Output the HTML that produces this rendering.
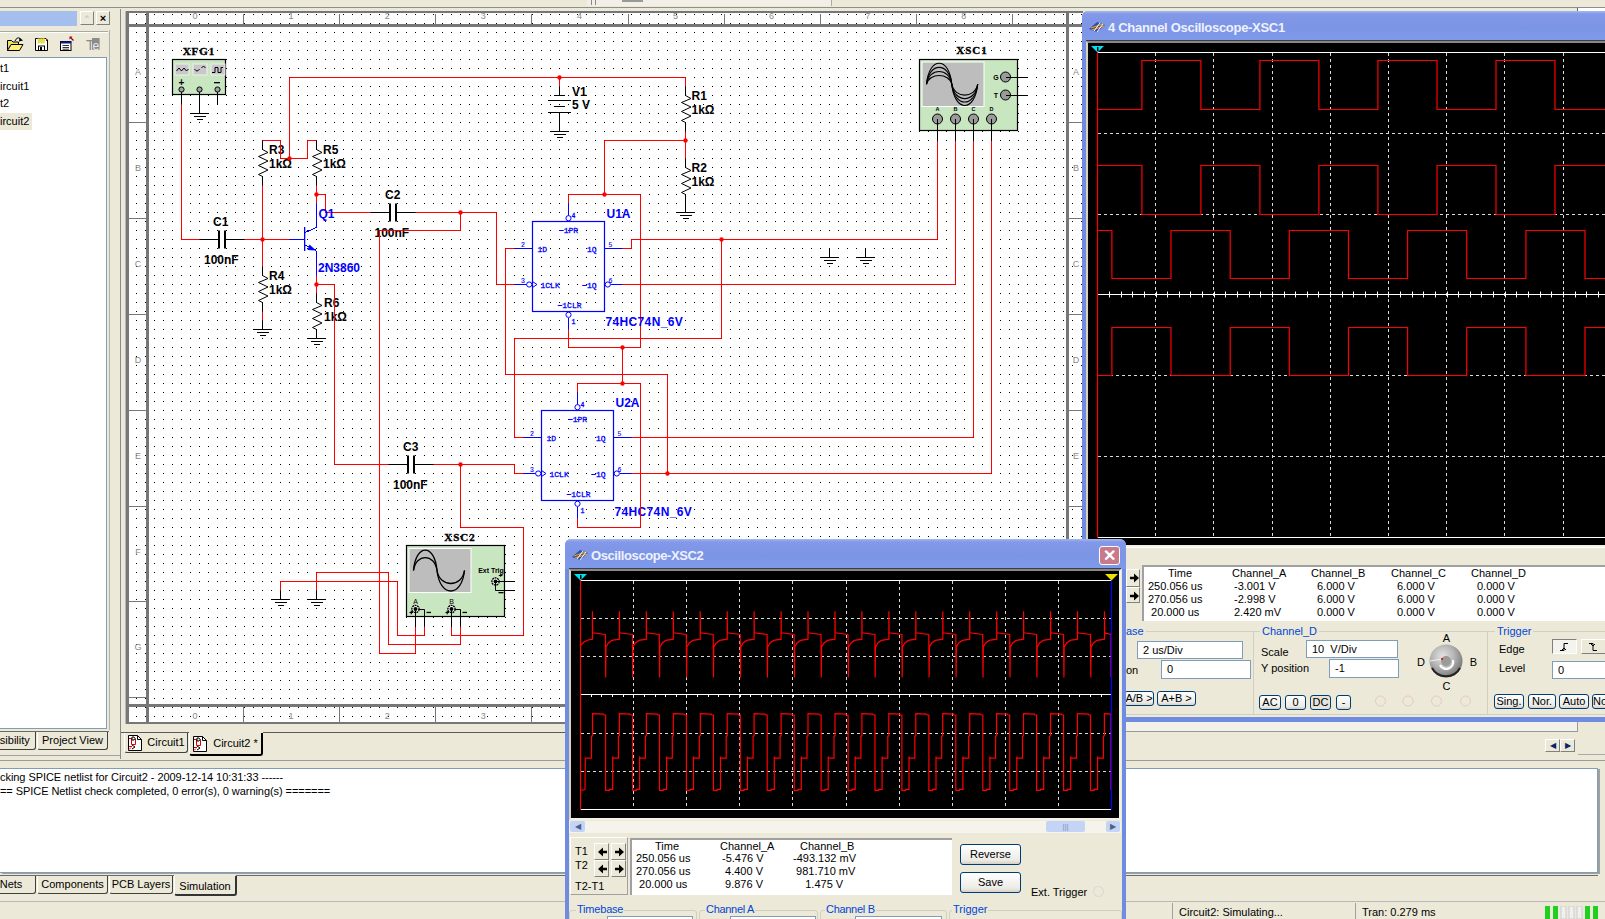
<!DOCTYPE html>
<html><head><meta charset="utf-8">
<style>
*{margin:0;padding:0;box-sizing:border-box}
html,body{width:1605px;height:919px;overflow:hidden;background:#ECE9D8;font-family:"Liberation Sans",sans-serif;font-size:11px;color:#000}
.a{position:absolute}
.btn3d{border:1px solid;border-color:#fff #808080 #808080 #fff;background:#ECE9D8}
.tab{position:absolute;height:18px;border:1px solid #404040;border-top:none;border-left-color:#FFFFFF;background:#ECE9D8;font-size:11px;line-height:16px;text-align:center;border-radius:0 0 3px 3px;white-space:pre}
.xpbtn{position:absolute;border:1px solid #003C74;border-radius:3px;background:linear-gradient(#FFFFFF,#ECEBE6 80%,#D6D0C5);font-size:11px;text-align:center}
.inp{position:absolute;background:#fff;border:1px solid #7F9DB9;font-size:11px;padding-left:5px}
.glab{position:absolute;color:#0046D5;font-size:11px}
.t{position:absolute;white-space:pre;font-size:11px;line-height:13px}
</style></head><body>
<div class="a" style="left:0;top:7px;width:1605px;height:1px;background:#8E8E8E"></div><div class="a" style="left:1577px;top:8px;width:28px;height:3px;background:#fff;border-left:1px solid #666"></div>
<div class="a" style="left:587px;top:0;width:245px;height:6px;border-right:1px solid #aaa;background:#F2F0E6"></div><div class="a" style="left:591px;top:0;width:1px;height:5px;background:#888"></div><div class="a" style="left:595px;top:0;width:1px;height:5px;background:#888"></div><div class="a" style="left:622px;top:0;width:21px;height:2px;background:#999"></div>

<!-- left panel -->
<div class="a" style="left:0;top:11px;width:77px;height:15px;background:#A4BEEE"></div>
<div class="a btn3d" style="left:80px;top:11px;width:14px;height:14px;color:#aaa;font-size:8px;text-align:center;line-height:12px">^</div>
<div class="a btn3d" style="left:96px;top:11px;width:14px;height:14px;font-weight:bold;font-size:11px;text-align:center;line-height:12px">×</div>

<svg class="a" style="left:0;top:0" width="112" height="58">
 <path d="M7.5 50.5 V40.5 H11.5 L13 42 H18.5 V50.5 Z" fill="#F0E060" stroke="#000"/>
 <path d="M7.5 50.5 L11 44.5 H23 L19.5 50.5 Z" fill="#FFF070" stroke="#000"/>
 <path d="M8 49.5 L11 44.8" stroke="#2020C0"/>
 <path d="M15 41 Q17 36.5 20 38.5" stroke="#000" fill="none"/><path d="M19.5 37.5 L23 40.5 L19 41.5 Z" fill="#000"/>
 <path d="M35.5 38.5 H46 L47.5 40 V50.5 H35.5 Z" fill="#fff" stroke="#000"/>
 <rect x="37.5" y="38.5" width="7.5" height="5" fill="#F0F040"/>
 <path d="M38 43 l6 -4.5 M38 41 l3.5 -2.5 M41 43.2 l4 -3" stroke="#C8C880"/>
 <rect x="38.5" y="46" width="6" height="4.5" fill="#fff" stroke="#000"/><rect x="40" y="47" width="2" height="3" fill="#000"/>
 <rect x="46" y="39" width="1" height="2" fill="#E00000"/>
 <rect x="60.5" y="41.5" width="10.5" height="9" fill="#fff" stroke="#000"/>
 <rect x="60.5" y="41.5" width="10.5" height="2" fill="#0A1A8A"/>
 <path d="M62.5 45.5 h6.5 M62.5 47.5 h6.5 M62.5 49.2 h6.5" stroke="#333"/>
 <path d="M73.5 40.5 L70.5 37.5" stroke="#A00000" stroke-width="1.3"/><path d="M69.5 36.5 h3 l-3 3z" fill="#A00000"/>
 <rect x="92" y="38" width="7.6" height="11.7" fill="#8C8C8C"/>
 <text x="86" y="49.5" font-family="Liberation Sans" font-size="14" fill="#8A8A8A">T</text><text x="92.5" y="49.5" font-family="Liberation Sans" font-size="12" fill="#E8E8E8">e</text>
 <path d="M0 31.5 H108" stroke="#A8A8A8"/><path d="M0 32.5 H108" stroke="#FFFFFF"/>
</svg>
<div class="a" style="left:0;top:57px;width:107px;height:672px;background:#fff;border:1px solid #7F9DB9;border-left:none"></div>
<div class="t" style="left:0;top:62px">t1</div>
<div class="t" style="left:0;top:80px">ircuit1</div>
<div class="t" style="left:0;top:97px">t2</div>
<div class="a" style="left:0;top:113px;width:32px;height:17px;background:#ECE9D8"></div>
<div class="t" style="left:0;top:115px">ircuit2</div>
<div class="a" style="left:0;top:731px;width:109px;height:1px;background:#6A6A6A"></div><div class="tab" style="left:-19px;top:732px;width:55px;padding-left:3px">Visibility</div><div class="a" style="left:0;top:755px;width:120px;height:1px;background:#A0A0A0"></div>
<div class="tab" style="left:37px;top:732px;width:71px">Project View</div>
<div class="a" style="left:120px;top:9px;width:1px;height:750px;background:#8A8A8A"></div>
<div class="a" style="left:109px;top:30px;width:1px;height:700px;background:#B0B0B0"></div>

<!-- schematic canvas -->
<div class="a" style="left:125px;top:11px;width:958px;height:713px;border:1px solid #B8B8B8;border-right:none"></div>
<div class="a" style="left:129px;top:13px;width:954px;height:710px;background:#fff"></div>
<svg class="a" style="left:0;top:0" width="1605" height="919">
<defs><pattern id="g" patternUnits="userSpaceOnUse" x="136" y="14" width="9" height="9"><rect x="0" y="0" width="1" height="1" fill="#000"/></pattern></defs>
<rect x="129" y="13" width="954" height="710" fill="url(#g)"/>
<rect x="126" y="11" width="957" height="2" fill="#777"/>
<rect x="126" y="11" width="3" height="712" fill="#777"/>
<rect x="146" y="13" width="3" height="710" fill="#777"/>
<rect x="1066" y="13" width="3" height="710" fill="#777"/>
<rect x="126" y="24" width="957" height="3" fill="#777"/>
<rect x="126" y="704" width="957" height="3" fill="#777"/>
<rect x="126" y="722" width="957" height="2" fill="#777"/>
<text x="195.0" y="19" font-family="Liberation Sans" font-size="9" fill="#888" text-anchor="middle">0</text>
<text x="195.0" y="719" font-family="Liberation Sans" font-size="9" fill="#888" text-anchor="middle">0</text>
<line x1="243.5" y1="14" x2="243.5" y2="24" stroke="#777"/>
<line x1="243.5" y1="707" x2="243.5" y2="722" stroke="#777"/>
<text x="291.1" y="19" font-family="Liberation Sans" font-size="9" fill="#888" text-anchor="middle">1</text>
<text x="291.1" y="719" font-family="Liberation Sans" font-size="9" fill="#888" text-anchor="middle">1</text>
<line x1="339.5" y1="14" x2="339.5" y2="24" stroke="#777"/>
<line x1="339.5" y1="707" x2="339.5" y2="722" stroke="#777"/>
<text x="387.2" y="19" font-family="Liberation Sans" font-size="9" fill="#888" text-anchor="middle">2</text>
<text x="387.2" y="719" font-family="Liberation Sans" font-size="9" fill="#888" text-anchor="middle">2</text>
<line x1="435.5" y1="14" x2="435.5" y2="24" stroke="#777"/>
<line x1="435.5" y1="707" x2="435.5" y2="722" stroke="#777"/>
<text x="483.3" y="19" font-family="Liberation Sans" font-size="9" fill="#888" text-anchor="middle">3</text>
<text x="483.3" y="719" font-family="Liberation Sans" font-size="9" fill="#888" text-anchor="middle">3</text>
<line x1="531.5" y1="14" x2="531.5" y2="24" stroke="#777"/>
<line x1="531.5" y1="707" x2="531.5" y2="722" stroke="#777"/>
<text x="579.4" y="19" font-family="Liberation Sans" font-size="9" fill="#888" text-anchor="middle">4</text>
<text x="579.4" y="719" font-family="Liberation Sans" font-size="9" fill="#888" text-anchor="middle">4</text>
<line x1="628.5" y1="14" x2="628.5" y2="24" stroke="#777"/>
<line x1="628.5" y1="707" x2="628.5" y2="722" stroke="#777"/>
<text x="675.5" y="19" font-family="Liberation Sans" font-size="9" fill="#888" text-anchor="middle">5</text>
<text x="675.5" y="719" font-family="Liberation Sans" font-size="9" fill="#888" text-anchor="middle">5</text>
<line x1="724.5" y1="14" x2="724.5" y2="24" stroke="#777"/>
<line x1="724.5" y1="707" x2="724.5" y2="722" stroke="#777"/>
<text x="771.6" y="19" font-family="Liberation Sans" font-size="9" fill="#888" text-anchor="middle">6</text>
<text x="771.6" y="719" font-family="Liberation Sans" font-size="9" fill="#888" text-anchor="middle">6</text>
<line x1="820.5" y1="14" x2="820.5" y2="24" stroke="#777"/>
<line x1="820.5" y1="707" x2="820.5" y2="722" stroke="#777"/>
<text x="867.7" y="19" font-family="Liberation Sans" font-size="9" fill="#888" text-anchor="middle">7</text>
<text x="867.7" y="719" font-family="Liberation Sans" font-size="9" fill="#888" text-anchor="middle">7</text>
<line x1="916.5" y1="14" x2="916.5" y2="24" stroke="#777"/>
<line x1="916.5" y1="707" x2="916.5" y2="722" stroke="#777"/>
<text x="963.8" y="19" font-family="Liberation Sans" font-size="9" fill="#888" text-anchor="middle">8</text>
<text x="963.8" y="719" font-family="Liberation Sans" font-size="9" fill="#888" text-anchor="middle">8</text>
<line x1="1012.5" y1="14" x2="1012.5" y2="24" stroke="#777"/>
<line x1="1012.5" y1="707" x2="1012.5" y2="722" stroke="#777"/>
<text x="138" y="75.0" font-family="Liberation Sans" font-size="9" fill="#888" text-anchor="middle">A</text>
<text x="1076" y="75.0" font-family="Liberation Sans" font-size="9" fill="#888" text-anchor="middle">A</text>
<line x1="129" y1="122.5" x2="146" y2="122.5" stroke="#777"/>
<line x1="1069" y1="122.5" x2="1083" y2="122.5" stroke="#777"/>
<text x="138" y="170.9" font-family="Liberation Sans" font-size="9" fill="#888" text-anchor="middle">B</text>
<text x="1076" y="170.9" font-family="Liberation Sans" font-size="9" fill="#888" text-anchor="middle">B</text>
<line x1="129" y1="218.5" x2="146" y2="218.5" stroke="#777"/>
<line x1="1069" y1="218.5" x2="1083" y2="218.5" stroke="#777"/>
<text x="138" y="266.8" font-family="Liberation Sans" font-size="9" fill="#888" text-anchor="middle">C</text>
<text x="1076" y="266.8" font-family="Liberation Sans" font-size="9" fill="#888" text-anchor="middle">C</text>
<line x1="129" y1="314.5" x2="146" y2="314.5" stroke="#777"/>
<line x1="1069" y1="314.5" x2="1083" y2="314.5" stroke="#777"/>
<text x="138" y="362.7" font-family="Liberation Sans" font-size="9" fill="#888" text-anchor="middle">D</text>
<text x="1076" y="362.7" font-family="Liberation Sans" font-size="9" fill="#888" text-anchor="middle">D</text>
<line x1="129" y1="410.5" x2="146" y2="410.5" stroke="#777"/>
<line x1="1069" y1="410.5" x2="1083" y2="410.5" stroke="#777"/>
<text x="138" y="458.6" font-family="Liberation Sans" font-size="9" fill="#888" text-anchor="middle">E</text>
<text x="1076" y="458.6" font-family="Liberation Sans" font-size="9" fill="#888" text-anchor="middle">E</text>
<line x1="129" y1="506.5" x2="146" y2="506.5" stroke="#777"/>
<line x1="1069" y1="506.5" x2="1083" y2="506.5" stroke="#777"/>
<text x="138" y="554.5" font-family="Liberation Sans" font-size="9" fill="#888" text-anchor="middle">F</text>
<text x="1076" y="554.5" font-family="Liberation Sans" font-size="9" fill="#888" text-anchor="middle">F</text>
<line x1="129" y1="601.5" x2="146" y2="601.5" stroke="#777"/>
<line x1="1069" y1="601.5" x2="1083" y2="601.5" stroke="#777"/>
<text x="138" y="650.4" font-family="Liberation Sans" font-size="9" fill="#888" text-anchor="middle">G</text>
<text x="1076" y="650.4" font-family="Liberation Sans" font-size="9" fill="#888" text-anchor="middle">G</text>
<line x1="129" y1="697.5" x2="146" y2="697.5" stroke="#777"/>
<line x1="1069" y1="697.5" x2="1083" y2="697.5" stroke="#777"/>
<rect x="172.5" y="59.5" width="53" height="35" fill="#C8E6C0" stroke="#000" stroke-width="1.2"/>
<rect x="175" y="64" width="14" height="11" fill="#C8C8C8" stroke="#F0F0F0" stroke-width="1"/>
<rect x="193" y="64" width="14" height="11" fill="#C8C8C8" stroke="#F0F0F0" stroke-width="1"/>
<rect x="211" y="64" width="14" height="11" fill="#C8C8C8" stroke="#F0F0F0" stroke-width="1"/>
<path d="M176.5 71 l2.5 -3 l2.5 3 l2.5 -3 l2.5 3 l2 -2" stroke="#000" fill="none" stroke-width="1"/>
<path d="M194.5 69 q2.5 4 5 0 m2 -1 l2 -2 l2 2" stroke="#000" fill="none" stroke-width="1"/>
<path d="M212 72.5 h3 v-5 h3 v5 h3 v-5 h2" stroke="#000" fill="none" stroke-width="1"/>
<text x="181.5" y="86" font-family="Liberation Sans" font-size="10" font-weight="bold" fill="#000" text-anchor="middle" >+</text>
<rect x="214" y="82" width="6" height="1.3" fill="#000"/>
<circle cx="181.5" cy="89.5" r="2.6" fill="#A0A0A0" stroke="#000" stroke-width="1"/>
<circle cx="199.5" cy="89.5" r="2.6" fill="#A0A0A0" stroke="#000" stroke-width="1"/>
<circle cx="217.5" cy="89.5" r="2.6" fill="#A0A0A0" stroke="#000" stroke-width="1"/>
<text x="199" y="55" font-family="Liberation Serif" font-size="11" font-weight="bold" fill="#000" text-anchor="middle" letter-spacing="1" stroke="#000" stroke-width="0.35">XFG1</text>
<line x1="181.5" y1="92" x2="181.5" y2="104.5" stroke="#000" stroke-width="1" shape-rendering="crispEdges"/>
<line x1="217.5" y1="92" x2="217.5" y2="104" stroke="#000" stroke-width="1" shape-rendering="crispEdges"/>
<line x1="199.5" y1="92" x2="199.5" y2="113" stroke="#000" stroke-width="1" shape-rendering="crispEdges"/>
<line x1="199.5" y1="104" x2="199.5" y2="113" stroke="#000" stroke-width="1" shape-rendering="crispEdges"/>
<line x1="190.0" y1="113.5" x2="209.0" y2="113.5" stroke="#000" stroke-width="1" shape-rendering="crispEdges"/>
<line x1="193.5" y1="116.5" x2="205.5" y2="116.5" stroke="#000" stroke-width="1" shape-rendering="crispEdges"/>
<line x1="196.5" y1="119.5" x2="202.5" y2="119.5" stroke="#000" stroke-width="1" shape-rendering="crispEdges"/>
<polyline points="181.5,104.5 181.5,239.5 199.5,239.5" stroke="#FF0000" stroke-width="1" fill="none" stroke-linejoin="miter"/>
<line x1="199.5" y1="239.5" x2="219.0" y2="239.5" stroke="#000" stroke-width="1" shape-rendering="crispEdges"/>
<line x1="225.0" y1="239.5" x2="244.5" y2="239.5" stroke="#000" stroke-width="1" shape-rendering="crispEdges"/>
<rect x="218.0" y="230.5" width="2" height="18" fill="#000"/>
<rect x="224.0" y="230.5" width="2" height="18" fill="#000"/>
<polyline points="244.5,239.5 289.5,239.5" stroke="#FF0000" stroke-width="1" fill="none" stroke-linejoin="miter"/>
<circle cx="262.5" cy="239.5" r="2.2" fill="#FF0000"/>
<text x="213" y="226" font-family="Liberation Sans" font-size="12" font-weight="bold" fill="#000" text-anchor="start" >C1</text>
<text x="204" y="264" font-family="Liberation Sans" font-size="12" font-weight="bold" fill="#000" text-anchor="start" >100nF</text>
<line x1="262.5" y1="140.5" x2="262.5" y2="149.5" stroke="#000" stroke-width="1" shape-rendering="crispEdges"/>
<polyline points="262.5,149.5 268.0,152.5 258.5,156.5 268.0,161.0 258.5,165.5 268.0,170.0 258.5,174.5 262.5,176.5" stroke="#000" stroke-width="1" fill="none" stroke-linejoin="miter"/>
<line x1="262.5" y1="176.5" x2="262.5" y2="185.5" stroke="#000" stroke-width="1" shape-rendering="crispEdges"/>
<line x1="316.5" y1="140.5" x2="316.5" y2="149.5" stroke="#000" stroke-width="1" shape-rendering="crispEdges"/>
<polyline points="316.5,149.5 322.0,152.5 312.5,156.5 322.0,161.0 312.5,165.5 322.0,170.0 312.5,174.5 316.5,176.5" stroke="#000" stroke-width="1" fill="none" stroke-linejoin="miter"/>
<line x1="316.5" y1="176.5" x2="316.5" y2="185.5" stroke="#000" stroke-width="1" shape-rendering="crispEdges"/>
<text x="269" y="154" font-family="Liberation Sans" font-size="12" font-weight="bold" fill="#000" text-anchor="start" >R3</text>
<text x="269" y="168" font-family="Liberation Sans" font-size="12" font-weight="bold" fill="#000" text-anchor="start" >1kΩ</text>
<text x="323" y="154" font-family="Liberation Sans" font-size="12" font-weight="bold" fill="#000" text-anchor="start" >R5</text>
<text x="323" y="168" font-family="Liberation Sans" font-size="12" font-weight="bold" fill="#000" text-anchor="start" >1kΩ</text>
<polyline points="262.5,140.5 280.5,140.5 280.5,158.5 307.5,158.5 307.5,140.5 316.5,140.5" stroke="#FF0000" stroke-width="1" fill="none" stroke-linejoin="miter"/>
<polyline points="289.5,158.5 289.5,77.5 685.5,77.5" stroke="#FF0000" stroke-width="1" fill="none" stroke-linejoin="miter"/>
<circle cx="289.5" cy="158.5" r="2.2" fill="#FF0000"/>
<circle cx="559.5" cy="77.5" r="2.2" fill="#FF0000"/>
<polyline points="262.5,185.5 262.5,266.5" stroke="#FF0000" stroke-width="1" fill="none" stroke-linejoin="miter"/>
<line x1="262.5" y1="266.5" x2="262.5" y2="275.5" stroke="#000" stroke-width="1" shape-rendering="crispEdges"/>
<polyline points="262.5,275.5 268.0,278.5 258.5,282.5 268.0,287.0 258.5,291.5 268.0,296.0 258.5,300.5 262.5,302.5" stroke="#000" stroke-width="1" fill="none" stroke-linejoin="miter"/>
<line x1="262.5" y1="302.5" x2="262.5" y2="311.5" stroke="#000" stroke-width="1" shape-rendering="crispEdges"/>
<text x="269" y="280" font-family="Liberation Sans" font-size="12" font-weight="bold" fill="#000" text-anchor="start" >R4</text>
<text x="269" y="294" font-family="Liberation Sans" font-size="12" font-weight="bold" fill="#000" text-anchor="start" >1kΩ</text>
<polyline points="262.5,311.5 262.5,320.5" stroke="#FF0000" stroke-width="1" fill="none" stroke-linejoin="miter"/>
<line x1="262.5" y1="320.5" x2="262.5" y2="329.5" stroke="#000" stroke-width="1" shape-rendering="crispEdges"/>
<line x1="253.0" y1="329.5" x2="272.0" y2="329.5" stroke="#000" stroke-width="1" shape-rendering="crispEdges"/>
<line x1="256.5" y1="332.5" x2="268.5" y2="332.5" stroke="#000" stroke-width="1" shape-rendering="crispEdges"/>
<line x1="259.5" y1="335.5" x2="265.5" y2="335.5" stroke="#000" stroke-width="1" shape-rendering="crispEdges"/>
<polyline points="316.5,185.5 316.5,203.5" stroke="#FF0000" stroke-width="1" fill="none" stroke-linejoin="miter"/>
<circle cx="316.5" cy="194.5" r="2.2" fill="#FF0000"/>
<polyline points="316.5,194.5 325.5,194.5 325.5,212.5 370.5,212.5" stroke="#FF0000" stroke-width="1" fill="none" stroke-linejoin="miter"/>
<line x1="316.5" y1="203.5" x2="316.5" y2="227.5" stroke="#0000FF" stroke-width="1" shape-rendering="crispEdges"/>
<line x1="316.5" y1="227.5" x2="305" y2="232.5" stroke="#0000FF" stroke-width="1" shape-rendering="crispEdges"/>
<rect x="304" y="227" width="1.3" height="24" fill="#0000FF"/>
<line x1="289.5" y1="239.5" x2="304.5" y2="239.5" stroke="#0000FF" stroke-width="1" shape-rendering="crispEdges"/>
<line x1="305" y1="245" x2="316.5" y2="250.5" stroke="#0000FF" stroke-width="1" shape-rendering="crispEdges"/>
<path d="M316 250.5 L309.5 244.5 L307.5 250 Z" fill="#0000FF"/>
<line x1="316.5" y1="250.5" x2="316.5" y2="275.5" stroke="#0000FF" stroke-width="1" shape-rendering="crispEdges"/>
<polyline points="316.5,275.5 316.5,293.5" stroke="#FF0000" stroke-width="1" fill="none" stroke-linejoin="miter"/>
<circle cx="316.5" cy="284.5" r="2.2" fill="#FF0000"/>
<line x1="316.5" y1="293.5" x2="316.5" y2="302.5" stroke="#000" stroke-width="1" shape-rendering="crispEdges"/>
<polyline points="316.5,302.5 322.0,305.5 312.5,309.5 322.0,314.0 312.5,318.5 322.0,323.0 312.5,327.5 316.5,329.5" stroke="#000" stroke-width="1" fill="none" stroke-linejoin="miter"/>
<line x1="316.5" y1="329.5" x2="316.5" y2="338.5" stroke="#000" stroke-width="1" shape-rendering="crispEdges"/>
<line x1="316.5" y1="338.5" x2="316.5" y2="338.51" stroke="#000" stroke-width="1" shape-rendering="crispEdges"/>
<line x1="307.0" y1="338.5" x2="326.0" y2="338.5" stroke="#000" stroke-width="1" shape-rendering="crispEdges"/>
<line x1="310.5" y1="341.5" x2="322.5" y2="341.5" stroke="#000" stroke-width="1" shape-rendering="crispEdges"/>
<line x1="313.5" y1="344.5" x2="319.5" y2="344.5" stroke="#000" stroke-width="1" shape-rendering="crispEdges"/>
<text x="318.5" y="218" font-family="Liberation Sans" font-size="12" font-weight="bold" fill="#0000FF" text-anchor="start" >Q1</text>
<text x="318" y="272" font-family="Liberation Sans" font-size="12" font-weight="bold" fill="#0000FF" text-anchor="start" >2N3860</text>
<text x="324" y="307" font-family="Liberation Sans" font-size="12" font-weight="bold" fill="#000" text-anchor="start" >R6</text>
<text x="324" y="321" font-family="Liberation Sans" font-size="12" font-weight="bold" fill="#000" text-anchor="start" >1kΩ</text>
<polyline points="316.5,284.5 334.5,284.5 334.5,464.5 388.5,464.5" stroke="#FF0000" stroke-width="1" fill="none" stroke-linejoin="miter"/>
<line x1="370.5" y1="212.5" x2="390.0" y2="212.5" stroke="#000" stroke-width="1" shape-rendering="crispEdges"/>
<line x1="396.0" y1="212.5" x2="415.5" y2="212.5" stroke="#000" stroke-width="1" shape-rendering="crispEdges"/>
<rect x="389.0" y="203.5" width="2" height="18" fill="#000"/>
<rect x="395.0" y="203.5" width="2" height="18" fill="#000"/>
<text x="385" y="199" font-family="Liberation Sans" font-size="12" font-weight="bold" fill="#000" text-anchor="start" >C2</text>
<text x="374.5" y="237" font-family="Liberation Sans" font-size="12" font-weight="bold" fill="#000" text-anchor="start" >100nF</text>
<polyline points="415.5,212.5 460.5,212.5 496.5,212.5 496.5,284.5 514.5,284.5" stroke="#FF0000" stroke-width="1" fill="none" stroke-linejoin="miter"/>
<circle cx="460.5" cy="212.5" r="2.2" fill="#FF0000"/>
<polyline points="460.5,212.5 460.5,230.5 379.5,230.5 379.5,653.5 415.5,653.5 415.5,626.5" stroke="#FF0000" stroke-width="1" fill="none" stroke-linejoin="miter"/>
<line x1="388.5" y1="464.5" x2="408.0" y2="464.5" stroke="#000" stroke-width="1" shape-rendering="crispEdges"/>
<line x1="414.0" y1="464.5" x2="433.5" y2="464.5" stroke="#000" stroke-width="1" shape-rendering="crispEdges"/>
<rect x="407.0" y="455.5" width="2" height="18" fill="#000"/>
<rect x="413.0" y="455.5" width="2" height="18" fill="#000"/>
<text x="403" y="451" font-family="Liberation Sans" font-size="12" font-weight="bold" fill="#000" text-anchor="start" >C3</text>
<text x="393" y="489" font-family="Liberation Sans" font-size="12" font-weight="bold" fill="#000" text-anchor="start" >100nF</text>
<polyline points="433.5,464.5 514.5,464.5 514.5,473.5 523.5,473.5" stroke="#FF0000" stroke-width="1" fill="none" stroke-linejoin="miter"/>
<circle cx="460.5" cy="464.5" r="2.2" fill="#FF0000"/>
<polyline points="460.5,464.5 460.5,527.5 523.5,527.5 523.5,635.5 451.5,635.5 451.5,626.5" stroke="#FF0000" stroke-width="1" fill="none" stroke-linejoin="miter"/>
<polyline points="559.5,77.5 559.5,86.5" stroke="#FF0000" stroke-width="1" fill="none" stroke-linejoin="miter"/>
<line x1="559.5" y1="86.5" x2="559.5" y2="95.5" stroke="#000" stroke-width="1" shape-rendering="crispEdges"/>
<line x1="554" y1="95.5" x2="565" y2="95.5" stroke="#000" stroke-width="1" shape-rendering="crispEdges"/>
<line x1="548" y1="100.5" x2="571" y2="100.5" stroke="#000" stroke-width="1" shape-rendering="crispEdges"/>
<line x1="554" y1="106.5" x2="565" y2="106.5" stroke="#000" stroke-width="1" shape-rendering="crispEdges"/>
<line x1="548" y1="112.5" x2="571" y2="112.5" stroke="#000" stroke-width="1" shape-rendering="crispEdges"/>
<line x1="559.5" y1="112.5" x2="559.5" y2="131" stroke="#000" stroke-width="1" shape-rendering="crispEdges"/>
<line x1="559.5" y1="131" x2="559.5" y2="131.01" stroke="#000" stroke-width="1" shape-rendering="crispEdges"/>
<line x1="550.0" y1="131.5" x2="569.0" y2="131.5" stroke="#000" stroke-width="1" shape-rendering="crispEdges"/>
<line x1="553.5" y1="134.5" x2="565.5" y2="134.5" stroke="#000" stroke-width="1" shape-rendering="crispEdges"/>
<line x1="556.5" y1="137.5" x2="562.5" y2="137.5" stroke="#000" stroke-width="1" shape-rendering="crispEdges"/>
<text x="572" y="96" font-family="Liberation Sans" font-size="12" font-weight="bold" fill="#000" text-anchor="start" >V1</text>
<text x="572" y="109" font-family="Liberation Sans" font-size="12" font-weight="bold" fill="#000" text-anchor="start" >5 V</text>
<polyline points="685.5,77.5 685.5,86.5" stroke="#FF0000" stroke-width="1" fill="none" stroke-linejoin="miter"/>
<line x1="685.5" y1="86.5" x2="685.5" y2="95.5" stroke="#000" stroke-width="1" shape-rendering="crispEdges"/>
<polyline points="685.5,95.5 691.0,98.5 681.5,102.5 691.0,107.0 681.5,111.5 691.0,116.0 681.5,120.5 685.5,122.5" stroke="#000" stroke-width="1" fill="none" stroke-linejoin="miter"/>
<line x1="685.5" y1="122.5" x2="685.5" y2="131.5" stroke="#000" stroke-width="1" shape-rendering="crispEdges"/>
<polyline points="685.5,131.5 685.5,158.5" stroke="#FF0000" stroke-width="1" fill="none" stroke-linejoin="miter"/>
<circle cx="685.5" cy="140.5" r="2.2" fill="#FF0000"/>
<line x1="685.5" y1="158.5" x2="685.5" y2="167.5" stroke="#000" stroke-width="1" shape-rendering="crispEdges"/>
<polyline points="685.5,167.5 691.0,170.5 681.5,174.5 691.0,179.0 681.5,183.5 691.0,188.0 681.5,192.5 685.5,194.5" stroke="#000" stroke-width="1" fill="none" stroke-linejoin="miter"/>
<line x1="685.5" y1="194.5" x2="685.5" y2="203.5" stroke="#000" stroke-width="1" shape-rendering="crispEdges"/>
<line x1="685.5" y1="203.5" x2="685.5" y2="212.5" stroke="#000" stroke-width="1" shape-rendering="crispEdges"/>
<line x1="685.5" y1="212.5" x2="685.5" y2="212.51" stroke="#000" stroke-width="1" shape-rendering="crispEdges"/>
<line x1="676.0" y1="212.5" x2="695.0" y2="212.5" stroke="#000" stroke-width="1" shape-rendering="crispEdges"/>
<line x1="679.5" y1="215.5" x2="691.5" y2="215.5" stroke="#000" stroke-width="1" shape-rendering="crispEdges"/>
<line x1="682.5" y1="218.5" x2="688.5" y2="218.5" stroke="#000" stroke-width="1" shape-rendering="crispEdges"/>
<text x="691.5" y="100" font-family="Liberation Sans" font-size="12" font-weight="bold" fill="#000" text-anchor="start" >R1</text>
<text x="691.5" y="114" font-family="Liberation Sans" font-size="12" font-weight="bold" fill="#000" text-anchor="start" >1kΩ</text>
<text x="691.5" y="172" font-family="Liberation Sans" font-size="12" font-weight="bold" fill="#000" text-anchor="start" >R2</text>
<text x="691.5" y="186" font-family="Liberation Sans" font-size="12" font-weight="bold" fill="#000" text-anchor="start" >1kΩ</text>
<polyline points="685.5,140.5 604.5,140.5 604.5,194.5" stroke="#FF0000" stroke-width="1" fill="none" stroke-linejoin="miter"/>
<circle cx="604.5" cy="194.5" r="2.2" fill="#FF0000"/>
<polyline points="568.5,203.5 568.5,194.5 640.5,194.5 640.5,347.5" stroke="#FF0000" stroke-width="1" fill="none" stroke-linejoin="miter"/>
<rect x="532.5" y="221.5" width="72.0" height="90.0" fill="none" stroke="#0000FF" stroke-width="1.2"/>
<line x1="568.5" y1="203.5" x2="568.5" y2="215.5" stroke="#0000FF" stroke-width="1" shape-rendering="crispEdges"/>
<circle cx="568.5" cy="218.2" r="2.6" fill="#fff" stroke="#0000FF" stroke-width="1"/>
<circle cx="568.5" cy="314.8" r="2.6" fill="#fff" stroke="#0000FF" stroke-width="1"/>
<line x1="568.5" y1="317.5" x2="568.5" y2="329.5" stroke="#0000FF" stroke-width="1" shape-rendering="crispEdges"/>
<line x1="514.5" y1="248.5" x2="532.5" y2="248.5" stroke="#0000FF" stroke-width="1" shape-rendering="crispEdges"/>
<line x1="514.5" y1="284.5" x2="526.5" y2="284.5" stroke="#0000FF" stroke-width="1" shape-rendering="crispEdges"/>
<circle cx="529.2" cy="284.5" r="2.6" fill="#fff" stroke="#0000FF" stroke-width="1"/>
<path d="M532.5 281.5 L537.0 284.5 L532.5 287.5" fill="none" stroke="#0000FF" stroke-width="1"/>
<line x1="604.5" y1="248.5" x2="622.5" y2="248.5" stroke="#0000FF" stroke-width="1" shape-rendering="crispEdges"/>
<circle cx="607.8" cy="284.5" r="2.6" fill="#fff" stroke="#0000FF" stroke-width="1"/>
<line x1="610.5" y1="284.5" x2="622.5" y2="284.5" stroke="#0000FF" stroke-width="1" shape-rendering="crispEdges"/>
<text x="568.5" y="233.0" font-family="Liberation Mono" font-size="8" font-weight="normal" fill="#0000FF" text-anchor="middle" stroke="#0000FF" stroke-width="0.3">~1PR</text>
<text x="537.5" y="251.5" font-family="Liberation Mono" font-size="8" font-weight="normal" fill="#0000FF" text-anchor="" stroke="#0000FF" stroke-width="0.3">1D</text>
<text x="596.5" y="251.5" font-family="Liberation Mono" font-size="8" font-weight="normal" fill="#0000FF" text-anchor="end" stroke="#0000FF" stroke-width="0.3">1Q</text>
<text x="540.5" y="287.5" font-family="Liberation Mono" font-size="8" font-weight="normal" fill="#0000FF" text-anchor="" stroke="#0000FF" stroke-width="0.3">1CLK</text>
<text x="596.5" y="287.5" font-family="Liberation Mono" font-size="8" font-weight="normal" fill="#0000FF" text-anchor="end" stroke="#0000FF" stroke-width="0.3">~1Q</text>
<text x="569.5" y="307.5" font-family="Liberation Mono" font-size="8" font-weight="normal" fill="#0000FF" text-anchor="middle" stroke="#0000FF" stroke-width="0.3">~1CLR</text>
<text x="571.5" y="217.5" font-family="Liberation Mono" font-size="6.5" font-weight="normal" fill="#0000FF" text-anchor="" stroke="#0000FF" stroke-width="0.3">4</text>
<text x="571.5" y="323.5" font-family="Liberation Mono" font-size="6.5" font-weight="normal" fill="#0000FF" text-anchor="" stroke="#0000FF" stroke-width="0.3">1</text>
<text x="521" y="246.5" font-family="Liberation Mono" font-size="6.5" font-weight="normal" fill="#0000FF" text-anchor="" stroke="#0000FF" stroke-width="0.1">2</text>
<text x="521" y="282.5" font-family="Liberation Mono" font-size="6.5" font-weight="normal" fill="#0000FF" text-anchor="" stroke="#0000FF" stroke-width="0.1">3</text>
<text x="608.5" y="246.5" font-family="Liberation Mono" font-size="6.5" font-weight="normal" fill="#0000FF" text-anchor="" stroke="#0000FF" stroke-width="0.1">5</text>
<text x="608.5" y="282.5" font-family="Liberation Mono" font-size="6.5" font-weight="normal" fill="#0000FF" text-anchor="" stroke="#0000FF" stroke-width="0.1">6</text>
<text x="606.5" y="218" font-family="Liberation Sans" font-size="12" font-weight="bold" fill="#0000FF" text-anchor="start" >U1A</text>
<text x="605.5" y="326" font-family="Liberation Sans" font-size="12" font-weight="bold" fill="#0000FF" text-anchor="start" letter-spacing="0.35">74HC74N_6V</text>
<rect x="541.5" y="410.5" width="72.0" height="90.0" fill="none" stroke="#0000FF" stroke-width="1.2"/>
<line x1="577.5" y1="392.5" x2="577.5" y2="404.5" stroke="#0000FF" stroke-width="1" shape-rendering="crispEdges"/>
<circle cx="577.5" cy="407.2" r="2.6" fill="#fff" stroke="#0000FF" stroke-width="1"/>
<circle cx="577.5" cy="503.8" r="2.6" fill="#fff" stroke="#0000FF" stroke-width="1"/>
<line x1="577.5" y1="506.5" x2="577.5" y2="518.5" stroke="#0000FF" stroke-width="1" shape-rendering="crispEdges"/>
<line x1="523.5" y1="437.5" x2="541.5" y2="437.5" stroke="#0000FF" stroke-width="1" shape-rendering="crispEdges"/>
<line x1="523.5" y1="473.5" x2="535.5" y2="473.5" stroke="#0000FF" stroke-width="1" shape-rendering="crispEdges"/>
<circle cx="538.2" cy="473.5" r="2.6" fill="#fff" stroke="#0000FF" stroke-width="1"/>
<path d="M541.5 470.5 L546.0 473.5 L541.5 476.5" fill="none" stroke="#0000FF" stroke-width="1"/>
<line x1="613.5" y1="437.5" x2="631.5" y2="437.5" stroke="#0000FF" stroke-width="1" shape-rendering="crispEdges"/>
<circle cx="616.8" cy="473.5" r="2.6" fill="#fff" stroke="#0000FF" stroke-width="1"/>
<line x1="619.5" y1="473.5" x2="631.5" y2="473.5" stroke="#0000FF" stroke-width="1" shape-rendering="crispEdges"/>
<text x="577.5" y="422.0" font-family="Liberation Mono" font-size="8" font-weight="normal" fill="#0000FF" text-anchor="middle" stroke="#0000FF" stroke-width="0.3">~1PR</text>
<text x="546.5" y="440.5" font-family="Liberation Mono" font-size="8" font-weight="normal" fill="#0000FF" text-anchor="" stroke="#0000FF" stroke-width="0.3">1D</text>
<text x="605.5" y="440.5" font-family="Liberation Mono" font-size="8" font-weight="normal" fill="#0000FF" text-anchor="end" stroke="#0000FF" stroke-width="0.3">1Q</text>
<text x="549.5" y="476.5" font-family="Liberation Mono" font-size="8" font-weight="normal" fill="#0000FF" text-anchor="" stroke="#0000FF" stroke-width="0.3">1CLK</text>
<text x="605.5" y="476.5" font-family="Liberation Mono" font-size="8" font-weight="normal" fill="#0000FF" text-anchor="end" stroke="#0000FF" stroke-width="0.3">~1Q</text>
<text x="578.5" y="496.5" font-family="Liberation Mono" font-size="8" font-weight="normal" fill="#0000FF" text-anchor="middle" stroke="#0000FF" stroke-width="0.3">~1CLR</text>
<text x="580.5" y="406.5" font-family="Liberation Mono" font-size="6.5" font-weight="normal" fill="#0000FF" text-anchor="" stroke="#0000FF" stroke-width="0.3">4</text>
<text x="580.5" y="512.5" font-family="Liberation Mono" font-size="6.5" font-weight="normal" fill="#0000FF" text-anchor="" stroke="#0000FF" stroke-width="0.3">1</text>
<text x="530" y="435.5" font-family="Liberation Mono" font-size="6.5" font-weight="normal" fill="#0000FF" text-anchor="" stroke="#0000FF" stroke-width="0.1">2</text>
<text x="530" y="471.5" font-family="Liberation Mono" font-size="6.5" font-weight="normal" fill="#0000FF" text-anchor="" stroke="#0000FF" stroke-width="0.1">3</text>
<text x="617.5" y="435.5" font-family="Liberation Mono" font-size="6.5" font-weight="normal" fill="#0000FF" text-anchor="" stroke="#0000FF" stroke-width="0.1">5</text>
<text x="617.5" y="471.5" font-family="Liberation Mono" font-size="6.5" font-weight="normal" fill="#0000FF" text-anchor="" stroke="#0000FF" stroke-width="0.1">6</text>
<text x="615.5" y="407" font-family="Liberation Sans" font-size="12" font-weight="bold" fill="#0000FF" text-anchor="start" >U2A</text>
<text x="614.5" y="516" font-family="Liberation Sans" font-size="12" font-weight="bold" fill="#0000FF" text-anchor="start" letter-spacing="0.35">74HC74N_6V</text>
<polyline points="505.5,248.5 514.5,248.5" stroke="#FF0000" stroke-width="1" fill="none" stroke-linejoin="miter"/>
<polyline points="505.5,248.5 505.5,374.5 667.5,374.5 667.5,473.5" stroke="#FF0000" stroke-width="1" fill="none" stroke-linejoin="miter"/>
<polyline points="622.5,248.5 631.5,248.5 631.5,239.5 937.5,239.5 937.5,140.5" stroke="#FF0000" stroke-width="1" fill="none" stroke-linejoin="miter"/>
<circle cx="721.5" cy="239.5" r="2.2" fill="#FF0000"/>
<polyline points="622.5,284.5 955.5,284.5 955.5,140.5" stroke="#FF0000" stroke-width="1" fill="none" stroke-linejoin="miter"/>
<polyline points="568.5,329.5 568.5,347.5 640.5,347.5" stroke="#FF0000" stroke-width="1" fill="none" stroke-linejoin="miter"/>
<circle cx="622.5" cy="347.5" r="2.2" fill="#FF0000"/>
<polyline points="622.5,347.5 622.5,383.5" stroke="#FF0000" stroke-width="1" fill="none" stroke-linejoin="miter"/>
<circle cx="622.5" cy="383.5" r="2.2" fill="#FF0000"/>
<polyline points="577.5,392.5 577.5,383.5 640.5,383.5 640.5,527.5 577.5,527.5 577.5,518.5" stroke="#FF0000" stroke-width="1" fill="none" stroke-linejoin="miter"/>
<polyline points="721.5,239.5 721.5,338.5 514.5,338.5 514.5,437.5 523.5,437.5" stroke="#FF0000" stroke-width="1" fill="none" stroke-linejoin="miter"/>
<polyline points="631.5,437.5 973.5,437.5 973.5,140.5" stroke="#FF0000" stroke-width="1" fill="none" stroke-linejoin="miter"/>
<polyline points="631.5,473.5 991.5,473.5 991.5,140.5" stroke="#FF0000" stroke-width="1" fill="none" stroke-linejoin="miter"/>
<circle cx="667.5" cy="473.5" r="2.2" fill="#FF0000"/>
<line x1="829.5" y1="248.5" x2="829.5" y2="257.5" stroke="#000" stroke-width="1" shape-rendering="crispEdges"/>
<line x1="820.0" y1="257.5" x2="839.0" y2="257.5" stroke="#000" stroke-width="1" shape-rendering="crispEdges"/>
<line x1="823.5" y1="260.5" x2="835.5" y2="260.5" stroke="#000" stroke-width="1" shape-rendering="crispEdges"/>
<line x1="826.5" y1="263.5" x2="832.5" y2="263.5" stroke="#000" stroke-width="1" shape-rendering="crispEdges"/>
<line x1="865.5" y1="248.5" x2="865.5" y2="257.5" stroke="#000" stroke-width="1" shape-rendering="crispEdges"/>
<line x1="856.0" y1="257.5" x2="875.0" y2="257.5" stroke="#000" stroke-width="1" shape-rendering="crispEdges"/>
<line x1="859.5" y1="260.5" x2="871.5" y2="260.5" stroke="#000" stroke-width="1" shape-rendering="crispEdges"/>
<line x1="862.5" y1="263.5" x2="868.5" y2="263.5" stroke="#000" stroke-width="1" shape-rendering="crispEdges"/>
<rect x="919.5" y="59.5" width="98" height="71" fill="#C8E6C0" stroke="#000" stroke-width="1.2"/>
<rect x="922" y="62" width="62" height="44.5" fill="#BDBDBD" stroke="#FFFFFF" stroke-width="1"/>
<path d="M926.5 84.2 C 929.0 56.3, 949.3 56.3, 951.8 84.2 C 954.4 98.7, 975.1 98.7, 977.7 84.2" stroke="#000" fill="none" stroke-width="1.1"/>
<path d="M926.5 84.2 C 929.0 61.8, 949.3 61.8, 951.8 84.2 C 954.4 103.4, 975.1 103.4, 977.7 84.2" stroke="#000" fill="none" stroke-width="1.1"/>
<path d="M926.5 84.2 C 929.0 67.2, 949.3 67.2, 951.8 84.2 C 954.4 108.0, 975.1 108.0, 977.7 84.2" stroke="#000" fill="none" stroke-width="1.1"/>
<path d="M926.5 84.2 C 929.0 72.6, 949.3 72.6, 951.8 84.2 C 954.4 112.6, 975.1 112.6, 977.7 84.2" stroke="#000" fill="none" stroke-width="1.1"/>
<text x="972" y="54" font-family="Liberation Serif" font-size="11" font-weight="bold" fill="#000" text-anchor="middle" letter-spacing="1" stroke="#000" stroke-width="0.35">XSC1</text>
<circle cx="937.5" cy="119" r="5" fill="#9A9A9A" stroke="#000" stroke-width="1"/>
<text x="937.5" y="111" font-family="Liberation Sans" font-size="5.5" font-weight="bold" fill="#000" text-anchor="middle" >A</text>
<line x1="937.5" y1="119" x2="937.5" y2="140.5" stroke="#000" stroke-width="1" shape-rendering="crispEdges"/>
<circle cx="955.5" cy="119" r="5" fill="#9A9A9A" stroke="#000" stroke-width="1"/>
<text x="955.5" y="111" font-family="Liberation Sans" font-size="5.5" font-weight="bold" fill="#000" text-anchor="middle" >B</text>
<line x1="955.5" y1="119" x2="955.5" y2="140.5" stroke="#000" stroke-width="1" shape-rendering="crispEdges"/>
<circle cx="973.5" cy="119" r="5" fill="#9A9A9A" stroke="#000" stroke-width="1"/>
<text x="973.5" y="111" font-family="Liberation Sans" font-size="5.5" font-weight="bold" fill="#000" text-anchor="middle" >C</text>
<line x1="973.5" y1="119" x2="973.5" y2="140.5" stroke="#000" stroke-width="1" shape-rendering="crispEdges"/>
<circle cx="991.5" cy="119" r="5" fill="#9A9A9A" stroke="#000" stroke-width="1"/>
<text x="991.5" y="111" font-family="Liberation Sans" font-size="5.5" font-weight="bold" fill="#000" text-anchor="middle" >D</text>
<line x1="991.5" y1="119" x2="991.5" y2="140.5" stroke="#000" stroke-width="1" shape-rendering="crispEdges"/>
<circle cx="1005.5" cy="77" r="5" fill="#9A9A9A" stroke="#000" stroke-width="1"/>
<text x="996" y="79.5" font-family="Liberation Sans" font-size="7" font-weight="bold" fill="#000" text-anchor="middle" >G</text>
<line x1="1005.5" y1="77.5" x2="1028" y2="77.5" stroke="#000" stroke-width="1" shape-rendering="crispEdges"/>
<circle cx="1005.5" cy="95" r="5" fill="#9A9A9A" stroke="#000" stroke-width="1"/>
<text x="996" y="97.5" font-family="Liberation Sans" font-size="7" font-weight="bold" fill="#000" text-anchor="middle" >T</text>
<line x1="1005.5" y1="95.5" x2="1028" y2="95.5" stroke="#000" stroke-width="1" shape-rendering="crispEdges"/>
<rect x="406.5" y="545.5" width="98" height="71" fill="#C8E6C0" stroke="#000" stroke-width="1.2"/>
<rect x="409" y="548.5" width="62" height="44" fill="#BDBDBD" stroke="#FFFFFF" stroke-width="1"/>
<path d="M413.5 570.5 C 415.9 543.2, 434.6 543.2, 437.0 570.5 C 439.8 587.8, 461.8 587.8, 464.5 570.5" stroke="#000" fill="none" stroke-width="1.3"/>
<path d="M413.5 570.5 C 415.9 553.2, 434.6 553.2, 437.0 570.5 C 439.8 597.8, 461.8 597.8, 464.5 570.5" stroke="#000" fill="none" stroke-width="1.3"/>
<text x="460" y="541" font-family="Liberation Serif" font-size="11" font-weight="bold" fill="#000" text-anchor="middle" letter-spacing="1" stroke="#000" stroke-width="0.35">XSC2</text>
<text x="491" y="573" font-family="Liberation Sans" font-size="7" font-weight="bold" fill="#000" text-anchor="middle" >Ext Trig</text>
<circle cx="495.5" cy="581.5" r="3.6" fill="#fff" stroke="#000" stroke-width="1.4" stroke-dasharray="2,0.6"/>
<circle cx="495.5" cy="581.5" r="2" fill="#000"/>
<line x1="495.5" y1="581.5" x2="515" y2="581.5" stroke="#000" stroke-width="1" shape-rendering="crispEdges"/>
<polyline points="495.5,583 495.5,590.5 515,590.5" stroke="#000" stroke-width="1" fill="none" stroke-linejoin="miter"/>
<text x="500.5" y="578" font-family="Liberation Sans" font-size="7" font-weight="bold" fill="#000" text-anchor="middle" >+</text>
<rect x="498.5" y="592" width="5" height="1.3" fill="#000"/>
<circle cx="415.5" cy="609" r="3.6" fill="#fff" stroke="#000" stroke-width="1.4" stroke-dasharray="2,0.6"/>
<circle cx="415.5" cy="609" r="2" fill="#000"/>
<text x="415.5" y="604" font-family="Liberation Sans" font-size="7" font-weight="normal" fill="#000" text-anchor="middle" >A</text>
<line x1="415.5" y1="609" x2="415.5" y2="626.5" stroke="#000" stroke-width="1" shape-rendering="crispEdges"/>
<polyline points="418.5,609.5 424.5,609.5 424.5,626.5" stroke="#000" stroke-width="1" fill="none" stroke-linejoin="miter"/>
<path d="M409.5 612.5 h3.5 M411.25 610.7 v3.6" stroke="#000" stroke-width="1.2"/>
<rect x="426.5" y="611.8" width="4.5" height="1.3" fill="#000"/>
<circle cx="451.5" cy="609" r="3.6" fill="#fff" stroke="#000" stroke-width="1.4" stroke-dasharray="2,0.6"/>
<circle cx="451.5" cy="609" r="2" fill="#000"/>
<text x="451.5" y="604" font-family="Liberation Sans" font-size="7" font-weight="normal" fill="#000" text-anchor="middle" >B</text>
<line x1="451.5" y1="609" x2="451.5" y2="626.5" stroke="#000" stroke-width="1" shape-rendering="crispEdges"/>
<polyline points="454.5,609.5 460.5,609.5 460.5,626.5" stroke="#000" stroke-width="1" fill="none" stroke-linejoin="miter"/>
<path d="M445.5 612.5 h3.5 M447.25 610.7 v3.6" stroke="#000" stroke-width="1.2"/>
<rect x="462.5" y="611.8" width="4.5" height="1.3" fill="#000"/>
<polyline points="280.5,590.5 280.5,581.5 397.5,581.5 397.5,635.5 424.5,635.5 424.5,626.5" stroke="#FF0000" stroke-width="1" fill="none" stroke-linejoin="miter"/>
<line x1="280.5" y1="590.5" x2="280.5" y2="599.5" stroke="#000" stroke-width="1" shape-rendering="crispEdges"/>
<line x1="271.0" y1="599.5" x2="290.0" y2="599.5" stroke="#000" stroke-width="1" shape-rendering="crispEdges"/>
<line x1="274.5" y1="602.5" x2="286.5" y2="602.5" stroke="#000" stroke-width="1" shape-rendering="crispEdges"/>
<line x1="277.5" y1="605.5" x2="283.5" y2="605.5" stroke="#000" stroke-width="1" shape-rendering="crispEdges"/>
<polyline points="316.5,590.5 316.5,572.5 388.5,572.5 388.5,644.5 460.5,644.5 460.5,626.5" stroke="#FF0000" stroke-width="1" fill="none" stroke-linejoin="miter"/>
<line x1="316.5" y1="590.5" x2="316.5" y2="599.5" stroke="#000" stroke-width="1" shape-rendering="crispEdges"/>
<line x1="307.0" y1="599.5" x2="326.0" y2="599.5" stroke="#000" stroke-width="1" shape-rendering="crispEdges"/>
<line x1="310.5" y1="602.5" x2="322.5" y2="602.5" stroke="#000" stroke-width="1" shape-rendering="crispEdges"/>
<line x1="313.5" y1="605.5" x2="319.5" y2="605.5" stroke="#000" stroke-width="1" shape-rendering="crispEdges"/>
</svg>

<!-- circuit tabs -->
<div class="a" style="left:121px;top:732px;width:962px;height:1px;background:#5A5A5A"></div><div class="tab" style="left:124px;top:733px;width:64px;height:20px;line-height:19px;padding-left:20px">Circuit1</div>
<div class="a" style="left:189px;top:732px;width:74px;height:1px;background:#ECE9D8"></div><div class="tab" style="left:189px;top:733px;width:74px;height:23px;line-height:21px;padding-left:20px;border-bottom-width:2px;border-right-width:2px;border-color:#000;border-left-color:#fff">Circuit2 *</div>
<svg class="a" style="left:127px;top:735px" width="140" height="20">
 <g id="di"><path d="M1.5 0.5 h9 l4 4 v11 h-13z" fill="#fff" stroke="#000"/><path d="M10.5 0.5 v4 h4" fill="none" stroke="#000"/><path d="M2 3.5 h3 M4.5 3.5 v6 h4 v-6 M2 11.5 h3 M2 14.5 l2 -2" stroke="#E00000" fill="none"/><path d="M5 2 h2 l1 1.5 l-1 1.5 h-2z M5 10 l3 2 l-3 2" stroke="#000" fill="none"/></g>
 <use href="#di" x="65" y="1"/>
</svg>
<div class="a" style="left:0;top:760px;width:1605px;height:1px;background:#9A9A9A"></div>
<div class="a" style="left:0;top:768px;width:1598px;height:105px;background:#fff;border:1px solid #7F9DB9;border-left:none;box-shadow:2px 1px 0 #A0A0A0"></div>
<div class="t" style="left:0;top:771px;letter-spacing:-0.06px">cking SPICE netlist for Circuit2 - 2009-12-14 10:31:33 ------</div>
<div class="t" style="left:0;top:785px;letter-spacing:-0.06px">== SPICE Netlist check completed, 0 error(s), 0 warning(s) =======</div>
<div class="a" style="left:0;top:875px;width:1598px;height:1px;background:#6A6A6A"></div><div class="tab" style="left:-14px;top:876px;width:50px">Nets</div>
<div class="tab" style="left:37px;top:876px;width:71px">Components</div>
<div class="tab" style="left:109px;top:876px;width:64px">PCB Layers</div>
<div class="a" style="left:174px;top:875px;width:62px;height:1px;background:#ECE9D8"></div><div class="tab" style="left:174px;top:876px;width:63px;height:20px;line-height:20px;border-bottom-width:2px;border-right-width:2px;border-color:#333;border-left-color:#fff">Simulation</div>
<div class="a" style="left:0;top:901px;width:1605px;height:1px;background:#B8B8B8"></div>
<div class="a" style="left:1172px;top:903px;width:1px;height:16px;background:#A0A0A0"></div>
<div class="a" style="left:1355px;top:903px;width:1px;height:16px;background:#A0A0A0"></div>
<div class="t" style="left:1179px;top:906px">Circuit2: Simulating...</div>
<div class="t" style="left:1362px;top:906px">Tran: 0.279 ms</div>
<svg class="a" style="left:1544px;top:906px" width="61" height="13">
 <rect x="1" y="0" width="5" height="13" fill="#20D020"/><rect x="9" y="0" width="5" height="13" fill="#20D020"/>
 <rect x="17" y="0" width="5" height="13" fill="#F0F0F0" stroke="#ccc"/><rect x="25" y="0" width="5" height="13" fill="#F0F0F0" stroke="#ccc"/><rect x="33" y="0" width="5" height="13" fill="#F0F0F0" stroke="#ccc"/>
 <rect x="41" y="0" width="5" height="13" fill="#20D020"/><rect x="49" y="0" width="5" height="13" fill="#20D020"/>
</svg>
<!-- area under xsc1 -->
<div class="a" style="left:1126px;top:722px;width:452px;height:10px;background:#F2F1EA;border-bottom:1px solid #999;border-right:1px solid #999"></div>
<div class="a btn3d" style="left:1545px;top:739px;width:15px;height:13px;font-size:8px;color:#0A246A;line-height:11px;text-align:center">◀</div>
<div class="a btn3d" style="left:1560px;top:739px;width:15px;height:13px;font-size:8px;color:#0A246A;line-height:11px;text-align:center">▶</div>
<div class="a" style="left:1578px;top:754px;width:27px;height:1px;background:#aaa"></div>

<!-- XSC1 window -->
<div class="a" style="left:1082px;top:11px;width:530px;height:711px;background:#6F8CE0;border-radius:6px 6px 0 0"></div>
<div class="a" style="left:1082px;top:11px;width:530px;height:30px;background:linear-gradient(#A4B8F2 0px,#8298E8 3px,#7D95E6 60%,#7F9AEA);border-radius:6px 6px 0 0"></div>
<div class="a" style="left:1086px;top:41px;width:520px;height:676px;background:#ECE9D8"></div>
<svg class="a" style="left:1088px;top:20px" width="18" height="14"><path d="M1 9 L9 2 L17 5 L9 12 Z" fill="#3050B0"/><path d="M3 8 l12 -4 M4 10 l12 -4" stroke="#F8A000" stroke-width="1.2"/><path d="M6 11 l6 -8 M9 12 l6 -8" stroke="#fff" stroke-width="1"/></svg>
<div class="a" style="left:1108px;top:20px;color:#EEF2FF;font-weight:bold;font-size:13px;line-height:16px;letter-spacing:-0.3px;white-space:pre">4 Channel Oscilloscope-XSC1</div>
<div class="a" style="left:1086px;top:40px;width:525px;height:1px;background:#3A3A5A"></div><div class="a" style="left:1086px;top:41px;width:525px;height:506px;background:#000;border:2px solid;border-color:#8A8878 #F4F2E4 #F4F2E4 #D8D4BC;border-right:none"></div>
<svg class="a" style="left:0;top:0" width="1605" height="919"><rect x="1089" y="44" width="516" height="501" fill="#000"/>
<line x1="1155.5" y1="53" x2="1155.5" y2="537" stroke="#DADADA" stroke-width="1" stroke-dasharray="3,3"/>
<line x1="1213.5" y1="53" x2="1213.5" y2="537" stroke="#DADADA" stroke-width="1" stroke-dasharray="3,3"/>
<line x1="1272.5" y1="53" x2="1272.5" y2="537" stroke="#DADADA" stroke-width="1" stroke-dasharray="3,3"/>
<line x1="1330.5" y1="53" x2="1330.5" y2="537" stroke="#DADADA" stroke-width="1" stroke-dasharray="3,3"/>
<line x1="1388.5" y1="53" x2="1388.5" y2="537" stroke="#DADADA" stroke-width="1" stroke-dasharray="3,3"/>
<line x1="1446.5" y1="53" x2="1446.5" y2="537" stroke="#DADADA" stroke-width="1" stroke-dasharray="3,3"/>
<line x1="1504.5" y1="53" x2="1504.5" y2="537" stroke="#DADADA" stroke-width="1" stroke-dasharray="3,3"/>
<line x1="1563.5" y1="53" x2="1563.5" y2="537" stroke="#DADADA" stroke-width="1" stroke-dasharray="3,3"/>
<line x1="1098" y1="133.5" x2="1605" y2="133.5" stroke="#DADADA" stroke-width="1" stroke-dasharray="3,3"/>
<line x1="1098" y1="214.5" x2="1605" y2="214.5" stroke="#DADADA" stroke-width="1" stroke-dasharray="3,3"/>
<line x1="1098" y1="375.5" x2="1605" y2="375.5" stroke="#DADADA" stroke-width="1" stroke-dasharray="3,3"/>
<line x1="1098" y1="456.5" x2="1605" y2="456.5" stroke="#DADADA" stroke-width="1" stroke-dasharray="3,3"/>
<line x1="1098" y1="294.5" x2="1605" y2="294.5" stroke="#fff" stroke-width="1"/>
<line x1="1097.5" y1="291.5" x2="1097.5" y2="297.5" stroke="#fff" stroke-width="1"/>
<line x1="1109.5" y1="291.5" x2="1109.5" y2="297.5" stroke="#fff" stroke-width="1"/>
<line x1="1121.5" y1="291.5" x2="1121.5" y2="297.5" stroke="#fff" stroke-width="1"/>
<line x1="1132.5" y1="291.5" x2="1132.5" y2="297.5" stroke="#fff" stroke-width="1"/>
<line x1="1144.5" y1="291.5" x2="1144.5" y2="297.5" stroke="#fff" stroke-width="1"/>
<line x1="1156.5" y1="291.5" x2="1156.5" y2="297.5" stroke="#fff" stroke-width="1"/>
<line x1="1167.5" y1="291.5" x2="1167.5" y2="297.5" stroke="#fff" stroke-width="1"/>
<line x1="1179.5" y1="291.5" x2="1179.5" y2="297.5" stroke="#fff" stroke-width="1"/>
<line x1="1190.5" y1="291.5" x2="1190.5" y2="297.5" stroke="#fff" stroke-width="1"/>
<line x1="1202.5" y1="291.5" x2="1202.5" y2="297.5" stroke="#fff" stroke-width="1"/>
<line x1="1214.5" y1="291.5" x2="1214.5" y2="297.5" stroke="#fff" stroke-width="1"/>
<line x1="1225.5" y1="291.5" x2="1225.5" y2="297.5" stroke="#fff" stroke-width="1"/>
<line x1="1237.5" y1="291.5" x2="1237.5" y2="297.5" stroke="#fff" stroke-width="1"/>
<line x1="1249.5" y1="291.5" x2="1249.5" y2="297.5" stroke="#fff" stroke-width="1"/>
<line x1="1260.5" y1="291.5" x2="1260.5" y2="297.5" stroke="#fff" stroke-width="1"/>
<line x1="1272.5" y1="291.5" x2="1272.5" y2="297.5" stroke="#fff" stroke-width="1"/>
<line x1="1284.5" y1="291.5" x2="1284.5" y2="297.5" stroke="#fff" stroke-width="1"/>
<line x1="1295.5" y1="291.5" x2="1295.5" y2="297.5" stroke="#fff" stroke-width="1"/>
<line x1="1307.5" y1="291.5" x2="1307.5" y2="297.5" stroke="#fff" stroke-width="1"/>
<line x1="1318.5" y1="291.5" x2="1318.5" y2="297.5" stroke="#fff" stroke-width="1"/>
<line x1="1330.5" y1="291.5" x2="1330.5" y2="297.5" stroke="#fff" stroke-width="1"/>
<line x1="1342.5" y1="291.5" x2="1342.5" y2="297.5" stroke="#fff" stroke-width="1"/>
<line x1="1353.5" y1="291.5" x2="1353.5" y2="297.5" stroke="#fff" stroke-width="1"/>
<line x1="1365.5" y1="291.5" x2="1365.5" y2="297.5" stroke="#fff" stroke-width="1"/>
<line x1="1377.5" y1="291.5" x2="1377.5" y2="297.5" stroke="#fff" stroke-width="1"/>
<line x1="1388.5" y1="291.5" x2="1388.5" y2="297.5" stroke="#fff" stroke-width="1"/>
<line x1="1400.5" y1="291.5" x2="1400.5" y2="297.5" stroke="#fff" stroke-width="1"/>
<line x1="1412.5" y1="291.5" x2="1412.5" y2="297.5" stroke="#fff" stroke-width="1"/>
<line x1="1423.5" y1="291.5" x2="1423.5" y2="297.5" stroke="#fff" stroke-width="1"/>
<line x1="1435.5" y1="291.5" x2="1435.5" y2="297.5" stroke="#fff" stroke-width="1"/>
<line x1="1447.5" y1="291.5" x2="1447.5" y2="297.5" stroke="#fff" stroke-width="1"/>
<line x1="1458.5" y1="291.5" x2="1458.5" y2="297.5" stroke="#fff" stroke-width="1"/>
<line x1="1470.5" y1="291.5" x2="1470.5" y2="297.5" stroke="#fff" stroke-width="1"/>
<line x1="1481.5" y1="291.5" x2="1481.5" y2="297.5" stroke="#fff" stroke-width="1"/>
<line x1="1493.5" y1="291.5" x2="1493.5" y2="297.5" stroke="#fff" stroke-width="1"/>
<line x1="1505.5" y1="291.5" x2="1505.5" y2="297.5" stroke="#fff" stroke-width="1"/>
<line x1="1516.5" y1="291.5" x2="1516.5" y2="297.5" stroke="#fff" stroke-width="1"/>
<line x1="1528.5" y1="291.5" x2="1528.5" y2="297.5" stroke="#fff" stroke-width="1"/>
<line x1="1540.5" y1="291.5" x2="1540.5" y2="297.5" stroke="#fff" stroke-width="1"/>
<line x1="1551.5" y1="291.5" x2="1551.5" y2="297.5" stroke="#fff" stroke-width="1"/>
<line x1="1563.5" y1="291.5" x2="1563.5" y2="297.5" stroke="#fff" stroke-width="1"/>
<line x1="1575.5" y1="291.5" x2="1575.5" y2="297.5" stroke="#fff" stroke-width="1"/>
<line x1="1586.5" y1="291.5" x2="1586.5" y2="297.5" stroke="#fff" stroke-width="1"/>
<line x1="1598.5" y1="291.5" x2="1598.5" y2="297.5" stroke="#fff" stroke-width="1"/>
<line x1="1097" y1="52.5" x2="1605" y2="52.5" stroke="#fff" stroke-width="1.2"/>
<line x1="1097" y1="537.5" x2="1605" y2="537.5" stroke="#fff" stroke-width="1.2"/>
<polyline points="1097.5,109.5 1141.9,109.5 1141.9,60.5 1200.9,60.5 1200.9,109.5 1259.9,109.5 1259.9,60.5 1318.9,60.5 1318.9,109.5 1377.9,109.5 1377.9,60.5 1437.0,60.5 1437.0,109.5 1496.0,109.5 1496.0,60.5 1555.0,60.5 1555.0,109.5 1606.0,109.5" fill="none" stroke="#FF0000" stroke-width="1.2"/>
<polyline points="1097.5,165.5 1141.9,165.5 1141.9,214.5 1200.9,214.5 1200.9,165.5 1259.9,165.5 1259.9,214.5 1318.9,214.5 1318.9,165.5 1377.9,165.5 1377.9,214.5 1437.0,214.5 1437.0,165.5 1496.0,165.5 1496.0,214.5 1555.0,214.5 1555.0,165.5 1606.0,165.5" fill="none" stroke="#FF0000" stroke-width="1.2"/>
<polyline points="1097.5,230.5 1111.9,230.5 1111.9,278.5 1171.0,278.5 1171.0,230.5 1230.2,230.5 1230.2,278.5 1289.3,278.5 1289.3,230.5 1348.5,230.5 1348.5,278.5 1407.6,278.5 1407.6,230.5 1466.7,230.5 1466.7,278.5 1525.9,278.5 1525.9,230.5 1585.0,230.5 1585.0,278.5 1606.0,278.5" fill="none" stroke="#FF0000" stroke-width="1.2"/>
<polyline points="1097.5,375.5 1111.9,375.5 1111.9,327.5 1171.0,327.5 1171.0,375.5 1230.2,375.5 1230.2,327.5 1289.3,327.5 1289.3,375.5 1348.5,375.5 1348.5,327.5 1407.6,327.5 1407.6,375.5 1466.7,375.5 1466.7,327.5 1525.9,327.5 1525.9,375.5 1585.0,375.5 1585.0,327.5 1606.0,327.5" fill="none" stroke="#FF0000" stroke-width="1.2"/>
<line x1="1097.5" y1="52" x2="1097.5" y2="538" stroke="#FF0000" stroke-width="1.2"/>
<path d="M1091 46 L1104 46 L1097.5 52.5 Z" fill="#00E0F0"/><rect x="1097" y="47" width="1.5" height="4" fill="#000"/></svg>
<div class="a" style="left:1086px;top:547px;width:519px;height:1px;background:#fff"></div>
<div class="a btn3d" style="left:1126px;top:569px;width:14px;height:18px"><svg width="14" height="16" style="position:absolute;left:0;top:0"><path d="M12 8 L7 3.5 V6.8 H3 V9.2 H7 V12.5 Z" fill="#000"/></svg></div>
<div class="a btn3d" style="left:1126px;top:587px;width:14px;height:16px"><svg width="14" height="16" style="position:absolute;left:0;top:0"><path d="M12 8 L7 3.5 V6.8 H3 V9.2 H7 V12.5 Z" fill="#000"/></svg></div>
<div class="a" style="left:1142px;top:565px;width:463px;height:56px;background:#fff;border-left:2px solid #A0A0A0;border-top:2px solid #A0A0A0"></div>
<div class="t" style="left:1168px;top:567px">Time</div>
<div class="t" style="left:1232px;top:567px">Channel_A</div>
<div class="t" style="left:1311px;top:567px">Channel_B</div>
<div class="t" style="left:1391px;top:567px">Channel_C</div>
<div class="t" style="left:1471px;top:567px">Channel_D</div>
<div class="t" style="left:1148px;top:580px">250.056 us<br>270.056 us<br> 20.000 us</div>
<div class="t" style="left:1234px;top:580px">-3.001 V<br>-2.998 V<br>2.420 mV</div>
<div class="t" style="left:1317px;top:580px">6.000 V<br>6.000 V<br>0.000 V</div>
<div class="t" style="left:1397px;top:580px">6.000 V<br>6.000 V<br>0.000 V</div>
<div class="t" style="left:1477px;top:580px">0.000 V<br>0.000 V<br>0.000 V</div>
<div class="a" style="left:1120px;top:631px;width:134px;height:84px;border:1px solid #D0D0BF;border-left:none"></div>
<div class="a" style="left:1253px;top:631px;width:235px;height:84px;border:1px solid #D0D0BF;border-left:none"></div>
<div class="a" style="left:1487px;top:631px;width:130px;height:84px;border:1px solid #D0D0BF;border-left:none"></div>
<div class="glab" style="left:1126px;top:625px;background:#ECE9D8;padding-right:2px">ase</div>
<div class="glab" style="left:1260px;top:625px;background:#ECE9D8;padding:0 2px">Channel_D</div>
<div class="glab" style="left:1495px;top:625px;background:#ECE9D8;padding:0 2px">Trigger</div>
<div class="inp" style="left:1137px;top:641px;width:106px;height:18px;line-height:16px">2 us/Div</div>
<div class="t" style="left:1126px;top:664px">on</div>
<div class="inp" style="left:1161px;top:660px;width:90px;height:19px;line-height:17px">0</div>
<div class="xpbtn" style="left:1124px;top:691px;width:30px;height:15px;line-height:13px">A/B &gt;</div>
<div class="xpbtn" style="left:1157px;top:691px;width:39px;height:15px;line-height:13px">A+B &gt;</div>
<div class="t" style="left:1261px;top:646px">Scale</div>
<div class="inp" style="left:1306px;top:640px;width:92px;height:18px;line-height:16px">10&nbsp;&nbsp;V/Div</div>
<div class="t" style="left:1261px;top:662px">Y position</div>
<div class="inp" style="left:1329px;top:659px;width:70px;height:19px;line-height:17px">-1</div>
<div class="xpbtn" style="left:1259px;top:695px;width:22px;height:15px;line-height:13px">AC</div>
<div class="xpbtn" style="left:1285px;top:695px;width:21px;height:15px;line-height:13px">0</div>
<div class="xpbtn" style="left:1310px;top:695px;width:21px;height:15px;line-height:13px;background:#E6E4DA">DC</div>
<div class="xpbtn" style="left:1336px;top:695px;width:15px;height:15px;line-height:13px">-</div>
<svg class="a" style="left:1370px;top:630px" width="115" height="80">
 <defs><radialGradient id="kn" cx="0.4" cy="0.35" r="0.7"><stop offset="0" stop-color="#E4E4E4"/><stop offset="0.5" stop-color="#B4B4B4"/><stop offset="1" stop-color="#707070"/></radialGradient></defs>
 <circle cx="76" cy="31" r="16.5" fill="url(#kn)"/><path d="M62 38 A16 16 0 0 0 90 38" stroke="#222" stroke-width="2" fill="none"/><path d="M70 35 A7 7 0 0 0 83 30" stroke="#fff" stroke-width="2.2" fill="none"/><circle cx="76" cy="31" r="5" fill="#9A9A9A"/><path d="M60 31 L72 29" stroke="#F0F0F0"/><circle cx="72" cy="29" r="1" fill="#D00000"/>
 <text x="76.5" y="12" font-family="Liberation Sans" font-size="11" text-anchor="middle">A</text>
 <text x="51" y="36" font-family="Liberation Sans" font-size="11" text-anchor="middle">D</text>
 <text x="103.5" y="36" font-family="Liberation Sans" font-size="11" text-anchor="middle">B</text>
 <text x="76.5" y="60" font-family="Liberation Sans" font-size="11" text-anchor="middle">C</text>
 <g stroke="#E8C8C8" fill="none"><circle cx="10.5" cy="71" r="5"/><circle cx="38" cy="71" r="5"/><circle cx="66.5" cy="71" r="5"/><circle cx="95.5" cy="71" r="5"/></g>
</svg>
<div class="t" style="left:1499px;top:643px">Edge</div>
<div class="a" style="left:1552px;top:639px;width:25px;height:15px;border:1px solid;border-color:#808080 #fff #fff #808080;background:#F4F3EE;text-align:center;font-size:11px;line-height:13px"><svg width="23" height="13"><path d="M7 10.5 h4 v-7 h4 M11 8 l-2 2 M11 8 l2 2" stroke="#000" fill="none"/></svg></div>
<div class="a btn3d" style="left:1581px;top:639px;width:25px;height:15px;text-align:center;font-size:11px;line-height:13px"><svg width="23" height="13"><path d="M7 3.5 h4 v7 h4 M11 6 l-2 -2 M11 6 l2 -2" stroke="#000" fill="none"/></svg></div>
<div class="t" style="left:1499px;top:662px">Level</div>
<div class="inp" style="left:1552px;top:661px;width:60px;height:18px;line-height:16px">0</div>
<div class="xpbtn" style="left:1494px;top:694px;width:30px;height:15px;line-height:13px">Sing.</div>
<div class="xpbtn" style="left:1528px;top:694px;width:28px;height:15px;line-height:13px">Nor.</div>
<div class="xpbtn" style="left:1559px;top:694px;width:30px;height:15px;line-height:13px">Auto</div>
<div class="xpbtn" style="left:1592px;top:694px;width:30px;height:15px;line-height:13px;text-align:left">No</div>

<!-- XSC2 window -->
<div class="a" style="left:565px;top:539px;width:561px;height:390px;background:#6F8CE0;border-radius:6px 6px 0 0"></div>
<div class="a" style="left:565px;top:539px;width:561px;height:30px;background:linear-gradient(#A4B8F2 0px,#8298E8 3px,#7D95E6 60%,#7F9AEA);border-radius:6px 6px 0 0"></div>
<div class="a" style="left:569px;top:569px;width:553px;height:360px;background:#ECE9D8"></div>
<svg class="a" style="left:571px;top:548px" width="18" height="14"><path d="M1 9 L9 2 L17 5 L9 12 Z" fill="#3050B0"/><path d="M3 8 l12 -4 M4 10 l12 -4" stroke="#F8A000" stroke-width="1.2"/><path d="M6 11 l6 -8 M9 12 l6 -8" stroke="#fff" stroke-width="1"/></svg>
<div class="a" style="left:591px;top:548px;color:#EEF2FF;font-weight:bold;font-size:13px;line-height:16px;letter-spacing:-0.4px;white-space:pre">Oscilloscope-XSC2</div>
<div class="a" style="left:1099px;top:546px;width:21px;height:19px;background:#C77A8C;border:1px solid #fff;border-radius:3px;color:#fff;font-size:16px;font-weight:bold;line-height:17px;text-align:center">✕</div>
<div class="a" style="left:569px;top:568px;width:552px;height:1px;background:#3A3A5A"></div><div class="a" style="left:569px;top:569px;width:552px;height:251px;background:#000;border:2px solid;border-color:#8A8878 #F4F2E4 #F4F2E4 #D8D4BC"></div>
<svg class="a" style="left:0;top:0" width="1605" height="919"><rect x="571" y="571" width="548" height="247" fill="#000"/>
<line x1="633.5" y1="581" x2="633.5" y2="809" stroke="#DADADA" stroke-width="1" stroke-dasharray="3,3"/>
<line x1="686.5" y1="581" x2="686.5" y2="809" stroke="#DADADA" stroke-width="1" stroke-dasharray="3,3"/>
<line x1="739.5" y1="581" x2="739.5" y2="809" stroke="#DADADA" stroke-width="1" stroke-dasharray="3,3"/>
<line x1="792.5" y1="581" x2="792.5" y2="809" stroke="#DADADA" stroke-width="1" stroke-dasharray="3,3"/>
<line x1="846.5" y1="581" x2="846.5" y2="809" stroke="#DADADA" stroke-width="1" stroke-dasharray="3,3"/>
<line x1="899.5" y1="581" x2="899.5" y2="809" stroke="#DADADA" stroke-width="1" stroke-dasharray="3,3"/>
<line x1="952.5" y1="581" x2="952.5" y2="809" stroke="#DADADA" stroke-width="1" stroke-dasharray="3,3"/>
<line x1="1005.5" y1="581" x2="1005.5" y2="809" stroke="#DADADA" stroke-width="1" stroke-dasharray="3,3"/>
<line x1="1058.5" y1="581" x2="1058.5" y2="809" stroke="#DADADA" stroke-width="1" stroke-dasharray="3,3"/>
<line x1="581" y1="618.5" x2="1111" y2="618.5" stroke="#DADADA" stroke-width="1" stroke-dasharray="3,3"/>
<line x1="581" y1="656.5" x2="1111" y2="656.5" stroke="#DADADA" stroke-width="1" stroke-dasharray="3,3"/>
<line x1="581" y1="733.5" x2="1111" y2="733.5" stroke="#DADADA" stroke-width="1" stroke-dasharray="3,3"/>
<line x1="581" y1="771.5" x2="1111" y2="771.5" stroke="#DADADA" stroke-width="1" stroke-dasharray="3,3"/>
<line x1="581" y1="694.5" x2="1111" y2="694.5" stroke="#fff" stroke-width="1.2"/>
<line x1="580.5" y1="694" x2="580.5" y2="697" stroke="#fff" stroke-width="1"/>
<line x1="591.5" y1="694" x2="591.5" y2="697" stroke="#fff" stroke-width="1"/>
<line x1="601.5" y1="694" x2="601.5" y2="697" stroke="#fff" stroke-width="1"/>
<line x1="612.5" y1="694" x2="612.5" y2="697" stroke="#fff" stroke-width="1"/>
<line x1="623.5" y1="694" x2="623.5" y2="697" stroke="#fff" stroke-width="1"/>
<line x1="633.5" y1="694" x2="633.5" y2="697" stroke="#fff" stroke-width="1"/>
<line x1="644.5" y1="694" x2="644.5" y2="697" stroke="#fff" stroke-width="1"/>
<line x1="655.5" y1="694" x2="655.5" y2="697" stroke="#fff" stroke-width="1"/>
<line x1="665.5" y1="694" x2="665.5" y2="697" stroke="#fff" stroke-width="1"/>
<line x1="676.5" y1="694" x2="676.5" y2="697" stroke="#fff" stroke-width="1"/>
<line x1="686.5" y1="694" x2="686.5" y2="697" stroke="#fff" stroke-width="1"/>
<line x1="697.5" y1="694" x2="697.5" y2="697" stroke="#fff" stroke-width="1"/>
<line x1="708.5" y1="694" x2="708.5" y2="697" stroke="#fff" stroke-width="1"/>
<line x1="718.5" y1="694" x2="718.5" y2="697" stroke="#fff" stroke-width="1"/>
<line x1="729.5" y1="694" x2="729.5" y2="697" stroke="#fff" stroke-width="1"/>
<line x1="740.5" y1="694" x2="740.5" y2="697" stroke="#fff" stroke-width="1"/>
<line x1="750.5" y1="694" x2="750.5" y2="697" stroke="#fff" stroke-width="1"/>
<line x1="761.5" y1="694" x2="761.5" y2="697" stroke="#fff" stroke-width="1"/>
<line x1="771.5" y1="694" x2="771.5" y2="697" stroke="#fff" stroke-width="1"/>
<line x1="782.5" y1="694" x2="782.5" y2="697" stroke="#fff" stroke-width="1"/>
<line x1="793.5" y1="694" x2="793.5" y2="697" stroke="#fff" stroke-width="1"/>
<line x1="803.5" y1="694" x2="803.5" y2="697" stroke="#fff" stroke-width="1"/>
<line x1="814.5" y1="694" x2="814.5" y2="697" stroke="#fff" stroke-width="1"/>
<line x1="825.5" y1="694" x2="825.5" y2="697" stroke="#fff" stroke-width="1"/>
<line x1="835.5" y1="694" x2="835.5" y2="697" stroke="#fff" stroke-width="1"/>
<line x1="846.5" y1="694" x2="846.5" y2="697" stroke="#fff" stroke-width="1"/>
<line x1="856.5" y1="694" x2="856.5" y2="697" stroke="#fff" stroke-width="1"/>
<line x1="867.5" y1="694" x2="867.5" y2="697" stroke="#fff" stroke-width="1"/>
<line x1="878.5" y1="694" x2="878.5" y2="697" stroke="#fff" stroke-width="1"/>
<line x1="888.5" y1="694" x2="888.5" y2="697" stroke="#fff" stroke-width="1"/>
<line x1="899.5" y1="694" x2="899.5" y2="697" stroke="#fff" stroke-width="1"/>
<line x1="909.5" y1="694" x2="909.5" y2="697" stroke="#fff" stroke-width="1"/>
<line x1="920.5" y1="694" x2="920.5" y2="697" stroke="#fff" stroke-width="1"/>
<line x1="931.5" y1="694" x2="931.5" y2="697" stroke="#fff" stroke-width="1"/>
<line x1="941.5" y1="694" x2="941.5" y2="697" stroke="#fff" stroke-width="1"/>
<line x1="952.5" y1="694" x2="952.5" y2="697" stroke="#fff" stroke-width="1"/>
<line x1="963.5" y1="694" x2="963.5" y2="697" stroke="#fff" stroke-width="1"/>
<line x1="973.5" y1="694" x2="973.5" y2="697" stroke="#fff" stroke-width="1"/>
<line x1="984.5" y1="694" x2="984.5" y2="697" stroke="#fff" stroke-width="1"/>
<line x1="994.5" y1="694" x2="994.5" y2="697" stroke="#fff" stroke-width="1"/>
<line x1="1005.5" y1="694" x2="1005.5" y2="697" stroke="#fff" stroke-width="1"/>
<line x1="1016.5" y1="694" x2="1016.5" y2="697" stroke="#fff" stroke-width="1"/>
<line x1="1026.5" y1="694" x2="1026.5" y2="697" stroke="#fff" stroke-width="1"/>
<line x1="1037.5" y1="694" x2="1037.5" y2="697" stroke="#fff" stroke-width="1"/>
<line x1="1048.5" y1="694" x2="1048.5" y2="697" stroke="#fff" stroke-width="1"/>
<line x1="1058.5" y1="694" x2="1058.5" y2="697" stroke="#fff" stroke-width="1"/>
<line x1="1069.5" y1="694" x2="1069.5" y2="697" stroke="#fff" stroke-width="1"/>
<line x1="1079.5" y1="694" x2="1079.5" y2="697" stroke="#fff" stroke-width="1"/>
<line x1="1090.5" y1="694" x2="1090.5" y2="697" stroke="#fff" stroke-width="1"/>
<line x1="1101.5" y1="694" x2="1101.5" y2="697" stroke="#fff" stroke-width="1"/>
<line x1="580" y1="580.5" x2="1111" y2="580.5" stroke="#fff" stroke-width="1.2"/>
<line x1="580" y1="809.5" x2="1111" y2="809.5" stroke="#fff" stroke-width="1.2"/>
<polyline points="580.5,645.5 584.0,642 588.0,640 592.4,639.2 592.4,639.2 592.4,611.2 592.6,632.8 605.4,634.5 605.7,677.5 606.0,647 608.4,643 611.9,640.4 619.4,639.2 619.4,639.2 619.4,611.2 619.6,632.8 632.4,634.5 632.6,677.5 633.0,647 635.4,643 638.9,640.4 646.3,639.2 646.3,639.2 646.3,611.2 646.5,632.8 659.3,634.5 659.6,677.5 659.9,647 662.3,643 665.8,640.4 673.3,639.2 673.3,639.2 673.3,611.2 673.5,632.8 686.3,634.5 686.6,677.5 686.9,647 689.3,643 692.8,640.4 700.2,639.2 700.2,639.2 700.2,611.2 700.4,632.8 713.2,634.5 713.5,677.5 713.8,647 716.2,643 719.7,640.4 727.2,639.2 727.2,639.2 727.2,611.2 727.4,632.8 740.2,634.5 740.5,677.5 740.8,647 743.2,643 746.7,640.4 754.1,639.2 754.1,639.2 754.1,611.2 754.3,632.8 767.1,634.5 767.4,677.5 767.7,647 770.1,643 773.6,640.4 781.1,639.2 781.1,639.2 781.1,611.2 781.3,632.8 794.1,634.5 794.4,677.5 794.7,647 797.1,643 800.6,640.4 808.0,639.2 808.0,639.2 808.0,611.2 808.2,632.8 821.0,634.5 821.3,677.5 821.6,647 824.0,643 827.5,640.4 835.0,639.2 835.0,639.2 835.0,611.2 835.2,632.8 848.0,634.5 848.3,677.5 848.6,647 851.0,643 854.5,640.4 861.9,639.2 861.9,639.2 861.9,611.2 862.1,632.8 874.9,634.5 875.2,677.5 875.5,647 877.9,643 881.4,640.4 888.9,639.2 888.9,639.2 888.9,611.2 889.1,632.8 901.9,634.5 902.2,677.5 902.5,647 904.9,643 908.4,640.4 915.8,639.2 915.8,639.2 915.8,611.2 916.0,632.8 928.8,634.5 929.1,677.5 929.4,647 931.8,643 935.3,640.4 942.8,639.2 942.8,639.2 942.8,611.2 943.0,632.8 955.8,634.5 956.1,677.5 956.4,647 958.8,643 962.3,640.4 969.7,639.2 969.7,639.2 969.7,611.2 969.9,632.8 982.7,634.5 983.0,677.5 983.3,647 985.7,643 989.2,640.4 996.7,639.2 996.7,639.2 996.7,611.2 996.9,632.8 1009.7,634.5 1010.0,677.5 1010.3,647 1012.7,643 1016.2,640.4 1023.6,639.2 1023.6,639.2 1023.6,611.2 1023.8,632.8 1036.6,634.5 1036.9,677.5 1037.2,647 1039.6,643 1043.1,640.4 1050.6,639.2 1050.6,639.2 1050.6,611.2 1050.8,632.8 1063.6,634.5 1063.9,677.5 1064.2,647 1066.6,643 1070.1,640.4 1077.5,639.2 1077.5,639.2 1077.5,611.2 1077.7,632.8 1090.5,634.5 1090.8,677.5 1091.1,647 1093.5,643 1097.0,640.4 1104.5,639.2 1104.5,639.2 1104.5,611.2 1104.7,632.8 1111.0,634.5 1111.0,677.5 1111.0,647 1111.0,643 1111.0,640.4 1111.0,639.2" fill="none" stroke="#FF0000" stroke-width="1.2"/>
<polyline points="580.5,790.5 585.0,789.5 585.3,758.2 591.5,758.2 591.5,758.2 591.5,736 592.5,736 592.5,713.6 603.4,714.1 604.0,715 605.6,715 605.6,790.3 609.4,790.3 609.4,789.4 612.7,789.4 612.7,756.6 613.1,758.2 618.4,758.2 618.4,758.2 618.4,736 619.4,736 619.4,713.6 630.3,714.1 630.9,715 632.5,715 632.5,790.3 636.3,790.3 636.3,789.4 639.6,789.4 639.6,756.6 640.0,758.2 645.4,758.2 645.4,758.2 645.4,736 646.4,736 646.4,713.6 657.3,714.1 657.9,715 659.5,715 659.5,790.3 663.3,790.3 663.3,789.4 666.6,789.4 666.6,756.6 667.0,758.2 672.3,758.2 672.3,758.2 672.3,736 673.3,736 673.3,713.6 684.2,714.1 684.8,715 686.4,715 686.4,790.3 690.2,790.3 690.2,789.4 693.5,789.4 693.5,756.6 693.9,758.2 699.3,758.2 699.3,758.2 699.3,736 700.3,736 700.3,713.6 711.2,714.1 711.8,715 713.4,715 713.4,790.3 717.2,790.3 717.2,789.4 720.5,789.4 720.5,756.6 720.9,758.2 726.2,758.2 726.2,758.2 726.2,736 727.2,736 727.2,713.6 738.1,714.1 738.7,715 740.3,715 740.3,790.3 744.1,790.3 744.1,789.4 747.4,789.4 747.4,756.6 747.8,758.2 753.1,758.2 753.1,758.2 753.1,736 754.1,736 754.1,713.6 765.0,714.1 765.6,715 767.2,715 767.2,790.3 771.0,790.3 771.0,789.4 774.3,789.4 774.3,756.6 774.7,758.2 780.1,758.2 780.1,758.2 780.1,736 781.1,736 781.1,713.6 792.0,714.1 792.6,715 794.2,715 794.2,790.3 798.0,790.3 798.0,789.4 801.3,789.4 801.3,756.6 801.7,758.2 807.0,758.2 807.0,758.2 807.0,736 808.0,736 808.0,713.6 818.9,714.1 819.5,715 821.1,715 821.1,790.3 824.9,790.3 824.9,789.4 828.2,789.4 828.2,756.6 828.6,758.2 834.0,758.2 834.0,758.2 834.0,736 835.0,736 835.0,713.6 845.9,714.1 846.5,715 848.1,715 848.1,790.3 851.9,790.3 851.9,789.4 855.2,789.4 855.2,756.6 855.6,758.2 860.9,758.2 860.9,758.2 860.9,736 861.9,736 861.9,713.6 872.8,714.1 873.4,715 875.0,715 875.0,790.3 878.8,790.3 878.8,789.4 882.1,789.4 882.1,756.6 882.5,758.2 887.8,758.2 887.8,758.2 887.8,736 888.8,736 888.8,713.6 899.7,714.1 900.3,715 901.9,715 901.9,790.3 905.7,790.3 905.7,789.4 909.0,789.4 909.0,756.6 909.4,758.2 914.8,758.2 914.8,758.2 914.8,736 915.8,736 915.8,713.6 926.7,714.1 927.3,715 928.9,715 928.9,790.3 932.7,790.3 932.7,789.4 936.0,789.4 936.0,756.6 936.4,758.2 941.7,758.2 941.7,758.2 941.7,736 942.7,736 942.7,713.6 953.6,714.1 954.2,715 955.8,715 955.8,790.3 959.6,790.3 959.6,789.4 962.9,789.4 962.9,756.6 963.3,758.2 968.7,758.2 968.7,758.2 968.7,736 969.7,736 969.7,713.6 980.6,714.1 981.2,715 982.8,715 982.8,790.3 986.6,790.3 986.6,789.4 989.9,789.4 989.9,756.6 990.3,758.2 995.6,758.2 995.6,758.2 995.6,736 996.6,736 996.6,713.6 1007.5,714.1 1008.1,715 1009.7,715 1009.7,790.3 1013.5,790.3 1013.5,789.4 1016.8,789.4 1016.8,756.6 1017.2,758.2 1022.5,758.2 1022.5,758.2 1022.5,736 1023.5,736 1023.5,713.6 1034.4,714.1 1035.0,715 1036.6,715 1036.6,790.3 1040.4,790.3 1040.4,789.4 1043.7,789.4 1043.7,756.6 1044.1,758.2 1049.5,758.2 1049.5,758.2 1049.5,736 1050.5,736 1050.5,713.6 1061.4,714.1 1062.0,715 1063.6,715 1063.6,790.3 1067.4,790.3 1067.4,789.4 1070.7,789.4 1070.7,756.6 1071.1,758.2 1076.4,758.2 1076.4,758.2 1076.4,736 1077.4,736 1077.4,713.6 1088.3,714.1 1088.9,715 1090.5,715 1090.5,790.3 1094.3,790.3 1094.3,789.4 1097.6,789.4 1097.6,756.6 1098.0,758.2 1103.4,758.2 1103.4,758.2 1103.4,736 1104.4,736 1104.4,713.6 1111.0,714.1 1111.0,715 1111.0,715 1111.0,790.3 1111.0,790.3 1111.0,789.4 1111.0,789.4 1111.0,756.6 1111.0,758.2 1111.0,758.2" fill="none" stroke="#FF0000" stroke-width="1.2"/>
<line x1="580.5" y1="580" x2="580.5" y2="810" stroke="#FF0000" stroke-width="1.2"/>
<line x1="1111.5" y1="580" x2="1111.5" y2="810" stroke="#0000FF" stroke-width="1.2"/>
<path d="M574 574 L587 574 L580.5 580.5 Z" fill="#00E0F0"/><rect x="580" y="575" width="1.5" height="4" fill="#000"/>
<path d="M1105 574 L1118 574 L1111.5 580.5 Z" fill="#F0E000"/></svg>
<div class="a" style="left:569px;top:821px;width:552px;height:12px;background:#F4F3EC"></div>
<div class="a" style="left:570px;top:821px;width:15px;height:11px;background:#C4D4F6;border-radius:2px;color:#4D6185;font-size:8px;line-height:11px;text-align:center">◀</div>
<div class="a" style="left:1046px;top:821px;width:39px;height:11px;background:#C4D4F6;border-radius:2px;color:#8090C0;font-size:8px;line-height:11px;text-align:center">|||</div>
<div class="a" style="left:1106px;top:821px;width:14px;height:11px;background:#C4D4F6;border-radius:2px;color:#4D6185;font-size:8px;line-height:11px;text-align:center">▶</div>
<div class="a" style="left:570px;top:837px;width:58px;height:58px;border:1px solid;border-color:#fff #A0A0A0 #A0A0A0 #fff"></div>
<div class="t" style="left:575px;top:845px">T1</div>
<div class="t" style="left:575px;top:859px">T2</div>
<div class="t" style="left:575px;top:880px">T2-T1</div>
<div class="a btn3d" style="left:594px;top:843px;width:15px;height:17px"><svg width="14" height="16" style="position:absolute;left:0;top:0"><path d="M3 8 L8 3.5 V6.8 H12 V9.2 H8 V12.5 Z" fill="#000"/></svg></div>
<div class="a btn3d" style="left:611px;top:843px;width:15px;height:17px"><svg width="14" height="16" style="position:absolute;left:0;top:0"><path d="M12 8 L7 3.5 V6.8 H3 V9.2 H7 V12.5 Z" fill="#000"/></svg></div>
<div class="a btn3d" style="left:594px;top:860px;width:15px;height:17px"><svg width="14" height="16" style="position:absolute;left:0;top:0"><path d="M3 8 L8 3.5 V6.8 H12 V9.2 H8 V12.5 Z" fill="#000"/></svg></div>
<div class="a btn3d" style="left:611px;top:860px;width:15px;height:17px"><svg width="14" height="16" style="position:absolute;left:0;top:0"><path d="M12 8 L7 3.5 V6.8 H3 V9.2 H7 V12.5 Z" fill="#000"/></svg></div>
<div class="a" style="left:630px;top:838px;width:322px;height:57px;background:#fff;border-left:2px solid #A0A0A0;border-top:2px solid #A0A0A0"></div>
<div class="t" style="left:655px;top:840px">Time</div>
<div class="t" style="left:720px;top:840px">Channel_A</div>
<div class="t" style="left:800px;top:840px">Channel_B</div>
<div class="t" style="left:636px;top:852px">250.056 us<br>270.056 us<br> 20.000 us</div>
<div class="t" style="left:722px;top:852px">-5.476 V<br> 4.400 V<br> 9.876 V</div>
<div class="t" style="left:793px;top:852px">-493.132 mV<br> 981.710 mV<br>    1.475 V</div>
<div class="xpbtn" style="left:960px;top:844px;width:61px;height:21px;line-height:19px">Reverse</div>
<div class="xpbtn" style="left:960px;top:872px;width:61px;height:21px;line-height:19px">Save</div>
<div class="t" style="left:1031px;top:886px">Ext. Trigger</div>
<div class="a" style="left:1093px;top:886px;width:11px;height:11px;border-radius:50%;border:1px solid #D8D8D0"></div>
<div class="a" style="left:569px;top:910px;width:128px;height:12px;border:1px solid #D0D0BF;border-radius:3px 3px 0 0"></div>
<div class="a" style="left:699px;top:910px;width:119px;height:12px;border:1px solid #D0D0BF;border-radius:3px 3px 0 0"></div>
<div class="a" style="left:820px;top:910px;width:127px;height:12px;border:1px solid #D0D0BF;border-radius:3px 3px 0 0"></div>
<div class="a" style="left:949px;top:910px;width:173px;height:12px;border:1px solid #D0D0BF;border-radius:3px 3px 0 0"></div>
<div class="glab" style="left:576px;top:903px;background:#ECE9D8;padding:0 1px;letter-spacing:-0.2px">Timebase</div>
<div class="glab" style="left:705px;top:903px;background:#ECE9D8;padding:0 1px;letter-spacing:-0.3px">Channel A</div>
<div class="glab" style="left:825px;top:903px;background:#ECE9D8;padding:0 1px;letter-spacing:-0.3px">Channel B</div>
<div class="glab" style="left:952px;top:903px;background:#ECE9D8;padding:0 1px">Trigger</div>
<div class="a" style="left:607px;top:916px;width:86px;height:5px;background:#fff;border:1px solid #7F9DB9"></div>
<div class="a" style="left:730px;top:916px;width:86px;height:5px;background:#fff;border:1px solid #7F9DB9"></div>
<div class="a" style="left:855px;top:916px;width:87px;height:5px;background:#fff;border:1px solid #7F9DB9"></div>
</body></html>
